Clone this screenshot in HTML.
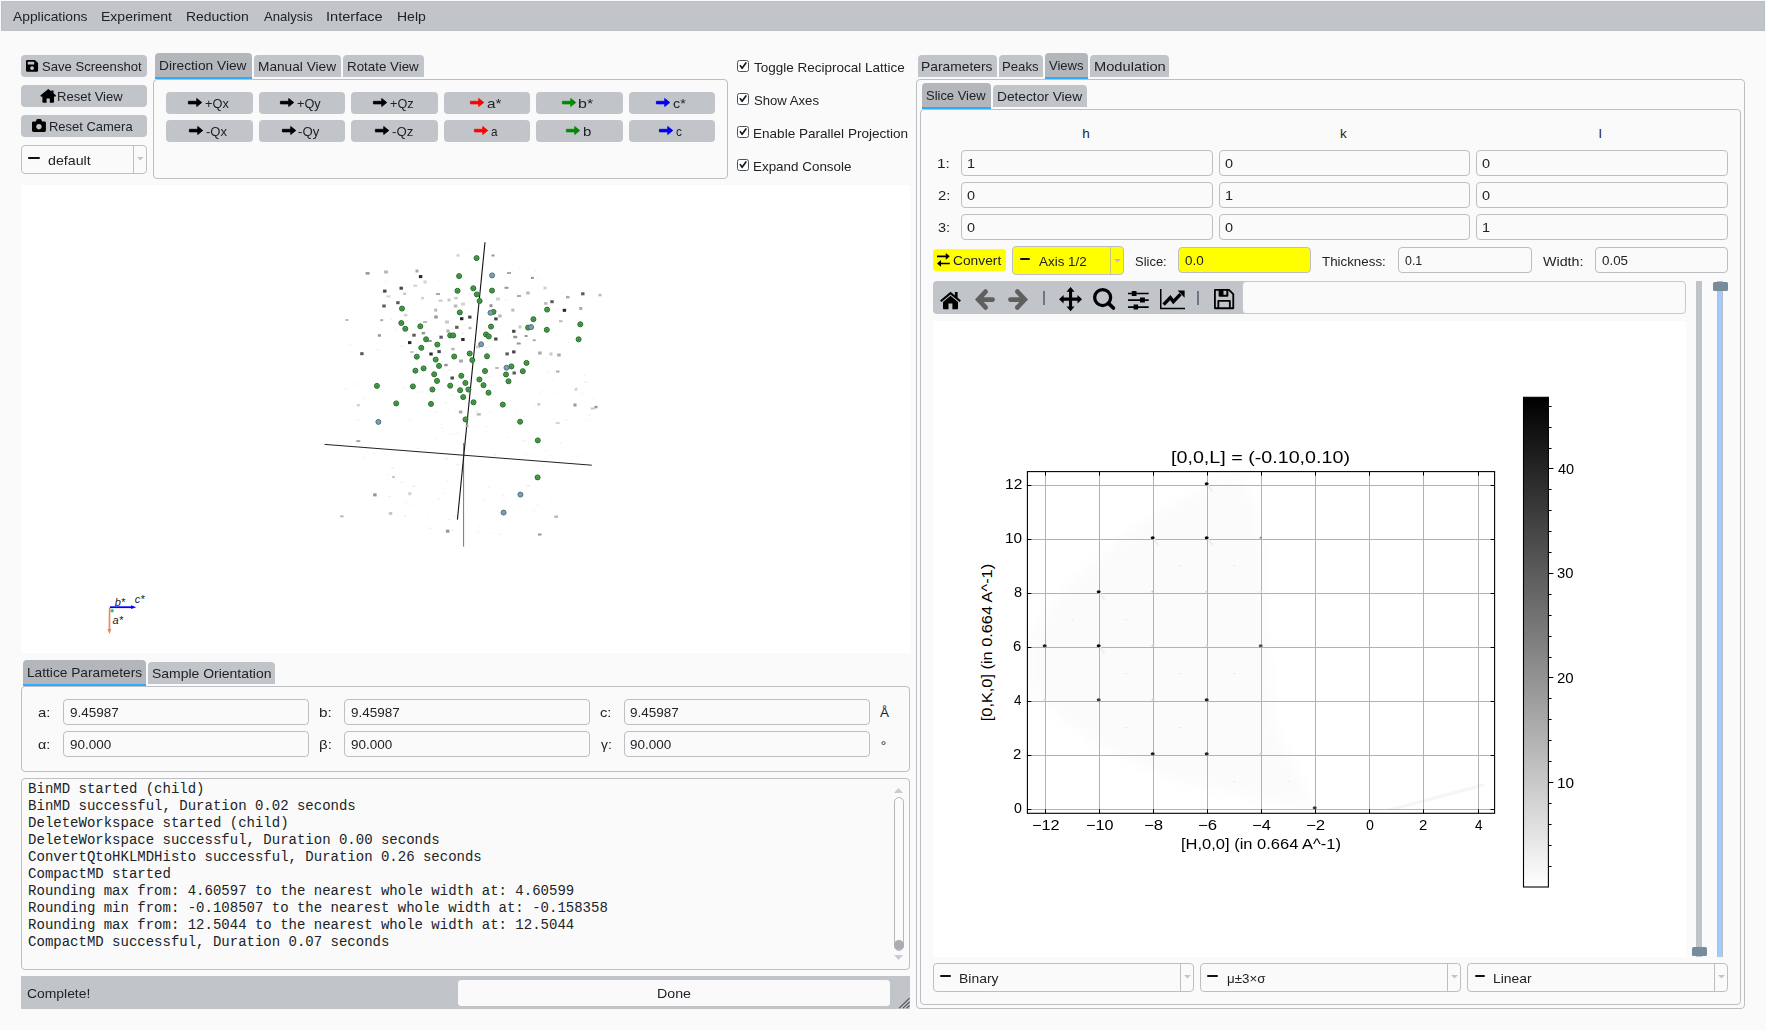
<!DOCTYPE html>
<html><head><meta charset="utf-8"><title>UI</title><style>
html,body{margin:0;padding:0}
body{width:1766px;height:1030px;background:#fafafa;position:relative;overflow:hidden;font-family:"Liberation Sans",sans-serif;font-size:14px;color:#202326}
.a{position:absolute}
.t{position:absolute;white-space:nowrap;line-height:1;display:block}
svg{overflow:visible}
</style></head><body>
<div class="a" style="left:1.00px;top:1.00px;width:1764.00px;height:30.00px;background:#c1c4c9;border:1px solid #bbbec3;box-sizing:border-box;"></div>
<span class="t" style="font-size:13.5px;transform:scaleX(1.0236);transform-origin:0 0;left:13.00px;top:10px;">Applications</span>
<span class="t" style="font-size:13.5px;transform:scaleX(1.0378);transform-origin:0 0;left:101.48px;top:10px;">Experiment</span>
<span class="t" style="font-size:13.5px;transform:scaleX(1.0330);transform-origin:0 0;left:186.48px;top:10px;">Reduction</span>
<span class="t" style="font-size:13.5px;transform:scaleX(0.9696);transform-origin:0 0;left:263.70px;top:10px;">Analysis</span>
<span class="t" style="font-size:13.5px;transform:scaleX(1.0796);transform-origin:0 0;left:325.89px;top:10px;">Interface</span>
<span class="t" style="font-size:13.5px;transform:scaleX(1.0374);transform-origin:0 0;left:396.78px;top:10px;">Help</span>
<div class="a" style="left:21.00px;top:55.30px;width:126.00px;height:21.50px;background:#c1c4c9;border-radius:4px;"></div>
<svg preserveAspectRatio="none" class="a" style="left:25.90px;top:60.10px;display:block;" width="12.10" height="11.70" viewBox="0 0 14 14"><path fill="#000" fill-rule="evenodd" d="M1.5 0H10.3L14 3.7V12.5Q14 14 12.5 14H1.5Q0 14 0 12.5V1.5Q0 0 1.5 0Z M2 2V5.5H9.5V2Z M7 7.5a2.2 2.2 0 1 0 .01 0Z"/></svg>
<span class="t" style="font-size:13.5px;transform:scaleX(0.9687);transform-origin:0 0;left:41.71px;top:60px;">Save Screenshot</span>
<div class="a" style="left:21.00px;top:85.30px;width:126.00px;height:21.50px;background:#c1c4c9;border-radius:4px;"></div>
<svg preserveAspectRatio="none" class="a" style="left:39.90px;top:88.90px;display:block;" width="16.00" height="13.80" viewBox="0 0 16 14"><path fill="#000" d="M8 .3Q8.4 0 8.8 .3L11.3 2.5V1.4h2.2V4.4L15.8 6.4Q16.2 6.8 15.8 7.2L15.3 7.8Q15 8.1 14.6 7.8L14 7.3V13.2Q14 14 13.2 14H9.8V9.6H6.6V14H3.2Q2.4 14 2.4 13.2V7.3L1.8 7.8Q1.4 8.1 1.1 7.8L.6 7.2Q.2 6.8 .6 6.4Z"/></svg>
<span class="t" style="font-size:13.5px;transform:scaleX(0.9653);transform-origin:0 0;left:57.46px;top:90px;">Reset View</span>
<div class="a" style="left:21.00px;top:115.30px;width:126.00px;height:21.50px;background:#c1c4c9;border-radius:4px;"></div>
<svg preserveAspectRatio="none" class="a" style="left:32.00px;top:119.10px;display:block;" width="13.90" height="13.00" viewBox="0 0 14 13"><path fill="#000" fill-rule="evenodd" d="M1.4 2.4H3.9L4.5 .8Q4.8 0 5.6 0H8.4Q9.2 0 9.5 .8L10.1 2.4H12.6Q14 2.4 14 3.8V11.6Q14 13 12.6 13H1.4Q0 13 0 11.6V3.8Q0 2.4 1.4 2.4Z M7 4.9a2.8 2.8 0 1 0 .01 0Z"/></svg>
<span class="t" style="font-size:13.5px;transform:scaleX(0.9605);transform-origin:0 0;left:48.66px;top:120px;">Reset Camera</span>
<div class="a" style="left:21.00px;top:145.00px;width:126.00px;height:29.00px;background:#fafafa;border:1px solid #bcbfc4;box-sizing:border-box;border-radius:4px;"></div>
<div class="a" style="left:133.00px;top:146.00px;width:1.00px;height:27.00px;background:#bcbfc4;"></div>
<div class="a" style="left:28.20px;top:157.00px;width:11.40px;height:2.20px;background:#111;border-radius:1px;"></div>
<span class="t" style="font-size:13.5px;transform:scaleX(1.0536);transform-origin:0 0;left:48.23px;top:154px;">default</span>
<svg class="a" style="left:136.60px;top:157.40px;" width="6.60" height="3.60" viewBox="0 0 6.6 3.6"><path fill="#c3c5c9" d="M0 0H6.6L3.3 3.6Z"/></svg>
<div class="a" style="left:155.00px;top:53.00px;width:96.80px;height:25.90px;background:#b3b6bb;border-radius:4px 4px 0 0;border-bottom:2.9px solid #2eaaff;box-sizing:border-box;"></div>
<span class="t" style="font-size:13.5px;transform:scaleX(1.0167);transform-origin:0 0;left:159.30px;top:59px;">Direction View</span>
<div class="a" style="left:254.20px;top:55.30px;width:86.80px;height:21.50px;background:#c1c4c9;border-radius:4px 4px 0 0;"></div>
<span class="t" style="font-size:13.5px;transform:scaleX(1.0131);transform-origin:0 0;left:258.01px;top:60px;">Manual View</span>
<div class="a" style="left:343.30px;top:55.30px;width:80.50px;height:21.50px;background:#c1c4c9;border-radius:4px 4px 0 0;"></div>
<span class="t" style="font-size:13.5px;transform:scaleX(0.9891);transform-origin:0 0;left:347.23px;top:60px;">Rotate View</span>
<div class="a" style="left:153.00px;top:79.00px;width:575.00px;height:100.00px;border:1px solid #bcbfc4;box-sizing:border-box;border-radius:4px;"></div>
<div class="a" style="left:166.00px;top:92.10px;width:87.00px;height:21.80px;background:#c1c4c9;border-radius:4px;"></div>
<svg preserveAspectRatio="none" class="a" style="left:187.90px;top:98.00px;display:block;" width="14.20" height="9.00" viewBox="0 0 14 9"><path fill="#000" stroke="#000" stroke-width="0.8" stroke-linejoin="round" d="M.4 3.3H8.6V.5L13.6 4.5 8.6 8.5V5.9H.4Z"/></svg>
<span class="t" style="font-size:13.5px;transform:scaleX(0.9480);transform-origin:0 0;left:205.32px;top:97px;">+Qx</span>
<div class="a" style="left:259.00px;top:92.10px;width:86.00px;height:21.80px;background:#c1c4c9;border-radius:4px;"></div>
<svg preserveAspectRatio="none" class="a" style="left:280.00px;top:98.00px;display:block;" width="14.20" height="9.00" viewBox="0 0 14 9"><path fill="#000" stroke="#000" stroke-width="0.8" stroke-linejoin="round" d="M.4 3.3H8.6V.5L13.6 4.5 8.6 8.5V5.9H.4Z"/></svg>
<span class="t" style="font-size:13.5px;transform:scaleX(0.9428);transform-origin:0 0;left:297.13px;top:97px;">+Qy</span>
<div class="a" style="left:351.00px;top:92.10px;width:87.00px;height:21.80px;background:#c1c4c9;border-radius:4px;"></div>
<svg preserveAspectRatio="none" class="a" style="left:372.80px;top:98.00px;display:block;" width="14.20" height="9.00" viewBox="0 0 14 9"><path fill="#000" stroke="#000" stroke-width="0.8" stroke-linejoin="round" d="M.4 3.3H8.6V.5L13.6 4.5 8.6 8.5V5.9H.4Z"/></svg>
<span class="t" style="font-size:13.5px;transform:scaleX(0.9374);transform-origin:0 0;left:390.23px;top:97px;">+Qz</span>
<div class="a" style="left:444.00px;top:92.10px;width:86.00px;height:21.80px;background:#c1c4c9;border-radius:4px;"></div>
<svg preserveAspectRatio="none" class="a" style="left:470.00px;top:98.00px;display:block;" width="14.20" height="9.00" viewBox="0 0 14 9"><path fill="#f00" stroke="#f00" stroke-width="0.8" stroke-linejoin="round" d="M.4 3.3H8.6V.5L13.6 4.5 8.6 8.5V5.9H.4Z"/></svg>
<span class="t" style="font-size:13.5px;transform:scaleX(1.1319);transform-origin:0 0;left:486.99px;top:97px;">a*</span>
<div class="a" style="left:536.00px;top:92.10px;width:87.00px;height:21.80px;background:#c1c4c9;border-radius:4px;"></div>
<svg preserveAspectRatio="none" class="a" style="left:561.70px;top:98.00px;display:block;" width="14.20" height="9.00" viewBox="0 0 14 9"><path fill="#008a00" stroke="#008a00" stroke-width="0.8" stroke-linejoin="round" d="M.4 3.3H8.6V.5L13.6 4.5 8.6 8.5V5.9H.4Z"/></svg>
<span class="t" style="font-size:13.5px;transform:scaleX(1.1835);transform-origin:0 0;left:578.44px;top:97px;">b*</span>
<div class="a" style="left:629.00px;top:92.10px;width:86.00px;height:21.80px;background:#c1c4c9;border-radius:4px;"></div>
<svg preserveAspectRatio="none" class="a" style="left:655.90px;top:98.00px;display:block;" width="14.20" height="9.00" viewBox="0 0 14 9"><path fill="#0000f0" stroke="#0000f0" stroke-width="0.8" stroke-linejoin="round" d="M.4 3.3H8.6V.5L13.6 4.5 8.6 8.5V5.9H.4Z"/></svg>
<span class="t" style="font-size:13.5px;transform:scaleX(1.0557);transform-origin:0 0;left:673.33px;top:97px;">c*</span>
<div class="a" style="left:166.00px;top:120.10px;width:87.00px;height:21.80px;background:#c1c4c9;border-radius:4px;"></div>
<svg preserveAspectRatio="none" class="a" style="left:188.90px;top:126.00px;display:block;" width="14.20" height="9.00" viewBox="0 0 14 9"><path fill="#000" stroke="#000" stroke-width="0.8" stroke-linejoin="round" d="M.4 3.3H8.6V.5L13.6 4.5 8.6 8.5V5.9H.4Z"/></svg>
<span class="t" style="font-size:13.5px;transform:scaleX(0.9687);transform-origin:0 0;left:206.08px;top:125px;">-Qx</span>
<div class="a" style="left:259.00px;top:120.10px;width:86.00px;height:21.80px;background:#c1c4c9;border-radius:4px;"></div>
<svg preserveAspectRatio="none" class="a" style="left:281.70px;top:126.00px;display:block;" width="14.20" height="9.00" viewBox="0 0 14 9"><path fill="#000" stroke="#000" stroke-width="0.8" stroke-linejoin="round" d="M.4 3.3H8.6V.5L13.6 4.5 8.6 8.5V5.9H.4Z"/></svg>
<span class="t" style="font-size:13.5px;transform:scaleX(0.9766);transform-origin:0 0;left:298.47px;top:125px;">-Qy</span>
<div class="a" style="left:351.00px;top:120.10px;width:87.00px;height:21.80px;background:#c1c4c9;border-radius:4px;"></div>
<svg preserveAspectRatio="none" class="a" style="left:374.80px;top:126.00px;display:block;" width="14.20" height="9.00" viewBox="0 0 14 9"><path fill="#000" stroke="#000" stroke-width="0.8" stroke-linejoin="round" d="M.4 3.3H8.6V.5L13.6 4.5 8.6 8.5V5.9H.4Z"/></svg>
<span class="t" style="font-size:13.5px;transform:scaleX(0.9763);transform-origin:0 0;left:391.57px;top:125px;">-Qz</span>
<div class="a" style="left:444.00px;top:120.10px;width:86.00px;height:21.80px;background:#c1c4c9;border-radius:4px;"></div>
<svg preserveAspectRatio="none" class="a" style="left:473.70px;top:126.00px;display:block;" width="14.20" height="9.00" viewBox="0 0 14 9"><path fill="#f00" stroke="#f00" stroke-width="0.8" stroke-linejoin="round" d="M.4 3.3H8.6V.5L13.6 4.5 8.6 8.5V5.9H.4Z"/></svg>
<span class="t" style="font-size:13.5px;transform:scaleX(0.8689);transform-origin:0 0;left:491.23px;top:125px;">a</span>
<div class="a" style="left:536.00px;top:120.10px;width:87.00px;height:21.80px;background:#c1c4c9;border-radius:4px;"></div>
<svg preserveAspectRatio="none" class="a" style="left:565.80px;top:126.00px;display:block;" width="14.20" height="9.00" viewBox="0 0 14 9"><path fill="#008a00" stroke="#008a00" stroke-width="0.8" stroke-linejoin="round" d="M.4 3.3H8.6V.5L13.6 4.5 8.6 8.5V5.9H.4Z"/></svg>
<span class="t" style="font-size:13.5px;transform:scaleX(1.1070);transform-origin:0 0;left:582.90px;top:125px;">b</span>
<div class="a" style="left:629.00px;top:120.10px;width:86.00px;height:21.80px;background:#c1c4c9;border-radius:4px;"></div>
<svg preserveAspectRatio="none" class="a" style="left:658.90px;top:126.00px;display:block;" width="14.20" height="9.00" viewBox="0 0 14 9"><path fill="#0000f0" stroke="#0000f0" stroke-width="0.8" stroke-linejoin="round" d="M.4 3.3H8.6V.5L13.6 4.5 8.6 8.5V5.9H.4Z"/></svg>
<span class="t" style="font-size:13.5px;transform:scaleX(0.8685);transform-origin:0 0;left:676.43px;top:125px;">c</span>
<div class="a" style="left:737.00px;top:60.00px;width:12.00px;height:12.00px;background:#ffffff;border:1px solid #4d535c;box-sizing:border-box;border-radius:2.5px;"></div>
<svg class="a" style="left:737.00px;top:60.00px;" width="12.00" height="12.00" viewBox="0 0 12 12"><path fill="none" stroke="#181c21" stroke-width="1.7" stroke-linecap="round" stroke-linejoin="round" d="M3.3 5.6L5.1 8.3 8.9 2.9"/></svg>
<span class="t" style="font-size:13.5px;transform:scaleX(0.9988);transform-origin:0 0;left:754.13px;top:61px;">Toggle Reciprocal Lattice</span>
<div class="a" style="left:737.00px;top:93.00px;width:12.00px;height:12.00px;background:#ffffff;border:1px solid #4d535c;box-sizing:border-box;border-radius:2.5px;"></div>
<svg class="a" style="left:737.00px;top:93.00px;" width="12.00" height="12.00" viewBox="0 0 12 12"><path fill="none" stroke="#181c21" stroke-width="1.7" stroke-linecap="round" stroke-linejoin="round" d="M3.3 5.6L5.1 8.3 8.9 2.9"/></svg>
<span class="t" style="font-size:13.5px;transform:scaleX(0.9729);transform-origin:0 0;left:753.81px;top:94px;">Show Axes</span>
<div class="a" style="left:737.00px;top:126.00px;width:12.00px;height:12.00px;background:#ffffff;border:1px solid #4d535c;box-sizing:border-box;border-radius:2.5px;"></div>
<svg class="a" style="left:737.00px;top:126.00px;" width="12.00" height="12.00" viewBox="0 0 12 12"><path fill="none" stroke="#181c21" stroke-width="1.7" stroke-linecap="round" stroke-linejoin="round" d="M3.3 5.6L5.1 8.3 8.9 2.9"/></svg>
<span class="t" style="font-size:13.5px;transform:scaleX(1.0034);transform-origin:0 0;left:753.32px;top:127px;">Enable Parallel Projection</span>
<div class="a" style="left:737.00px;top:159.00px;width:12.00px;height:12.00px;background:#ffffff;border:1px solid #4d535c;box-sizing:border-box;border-radius:2.5px;"></div>
<svg class="a" style="left:737.00px;top:159.00px;" width="12.00" height="12.00" viewBox="0 0 12 12"><path fill="none" stroke="#181c21" stroke-width="1.7" stroke-linecap="round" stroke-linejoin="round" d="M3.3 5.6L5.1 8.3 8.9 2.9"/></svg>
<span class="t" style="font-size:13.5px;transform:scaleX(0.9938);transform-origin:0 0;left:753.33px;top:160px;">Expand Console</span>
<div class="a" style="left:21.00px;top:185.00px;width:889.00px;height:468.00px;background:#ffffff;"></div>
<svg class="a" style="left:0.00px;top:0.00px;pointer-events:none;" width="1766.00" height="1030.00" viewBox="0 0 1766 1030"><rect x="449.3" y="433.1" width="1" height="1.5" fill="rgb(236,236,236)"/><rect x="546.1" y="450.5" width="1" height="1" fill="rgb(240,240,240)"/><rect x="443.9" y="402.3" width="3" height="1" fill="rgb(236,236,236)"/><rect x="485.2" y="352.1" width="1" height="1.5" fill="rgb(240,240,240)"/><rect x="449.6" y="377.3" width="1" height="1.5" fill="rgb(240,240,240)"/><rect x="506.9" y="334.6" width="1" height="1.5" fill="rgb(240,240,240)"/><rect x="426.7" y="513.9" width="1" height="1.5" fill="rgb(240,240,240)"/><rect x="425.0" y="366.2" width="1" height="1.5" fill="rgb(236,236,236)"/><rect x="514.9" y="411.3" width="2" height="1" fill="rgb(247,247,247)"/><rect x="398.6" y="342.2" width="1.5" height="1" fill="rgb(244,244,244)"/><rect x="450.4" y="328.9" width="3" height="1" fill="rgb(244,244,244)"/><rect x="460.1" y="319.5" width="1" height="1.5" fill="rgb(236,236,236)"/><rect x="372.2" y="452.5" width="3" height="1" fill="rgb(240,240,240)"/><rect x="567.0" y="418.7" width="2" height="1.5" fill="rgb(244,244,244)"/><rect x="417.7" y="469.7" width="1" height="1" fill="rgb(247,247,247)"/><rect x="546.1" y="357.3" width="1" height="1.5" fill="rgb(236,236,236)"/><rect x="438.0" y="279.8" width="2" height="1.5" fill="rgb(247,247,247)"/><rect x="391.1" y="467.5" width="3" height="1" fill="rgb(236,236,236)"/><rect x="485.7" y="426.0" width="1.5" height="1" fill="rgb(236,236,236)"/><rect x="506.7" y="437.1" width="3" height="1" fill="rgb(247,247,247)"/><rect x="505.7" y="465.1" width="1.5" height="1" fill="rgb(244,244,244)"/><rect x="507.6" y="337.5" width="2" height="1.5" fill="rgb(247,247,247)"/><rect x="562.6" y="292.8" width="1" height="1" fill="rgb(240,240,240)"/><rect x="526.8" y="485.0" width="3" height="1.5" fill="rgb(236,236,236)"/><rect x="493.1" y="453.9" width="3" height="1.5" fill="rgb(240,240,240)"/><rect x="405.0" y="468.1" width="1" height="1" fill="rgb(240,240,240)"/><rect x="558.4" y="313.7" width="3" height="1" fill="rgb(247,247,247)"/><rect x="402.0" y="449.7" width="1" height="1" fill="rgb(247,247,247)"/><rect x="514.3" y="414.1" width="1" height="1" fill="rgb(240,240,240)"/><rect x="441.3" y="367.4" width="1" height="1" fill="rgb(240,240,240)"/><rect x="448.0" y="370.0" width="3" height="1" fill="rgb(240,240,240)"/><rect x="384.0" y="280.9" width="3" height="1" fill="rgb(244,244,244)"/><rect x="531.3" y="454.7" width="3" height="1" fill="rgb(247,247,247)"/><rect x="452.6" y="433.4" width="2" height="1" fill="rgb(244,244,244)"/><rect x="488.7" y="345.8" width="1.5" height="1.5" fill="rgb(236,236,236)"/><rect x="400.8" y="481.7" width="2" height="1.5" fill="rgb(236,236,236)"/><rect x="536.4" y="298.6" width="2" height="1" fill="rgb(244,244,244)"/><rect x="435.5" y="438.0" width="1.5" height="1.5" fill="rgb(244,244,244)"/><rect x="516.6" y="252.3" width="1.5" height="1" fill="rgb(240,240,240)"/><rect x="464.6" y="328.5" width="2" height="1.5" fill="rgb(247,247,247)"/><rect x="482.9" y="393.2" width="3" height="1" fill="rgb(244,244,244)"/><rect x="501.3" y="494.1" width="3" height="1.5" fill="rgb(244,244,244)"/><rect x="594.1" y="379.0" width="1" height="1" fill="rgb(244,244,244)"/><rect x="534.2" y="447.1" width="1.5" height="1" fill="rgb(244,244,244)"/><rect x="381.2" y="291.0" width="3" height="1.5" fill="rgb(236,236,236)"/><rect x="412.4" y="485.6" width="3" height="1.5" fill="rgb(236,236,236)"/><rect x="468.1" y="293.7" width="3" height="1.5" fill="rgb(240,240,240)"/><rect x="411.6" y="504.0" width="3" height="1" fill="rgb(247,247,247)"/><rect x="466.8" y="355.9" width="1.5" height="1" fill="rgb(240,240,240)"/><rect x="561.4" y="408.8" width="1.5" height="1.5" fill="rgb(247,247,247)"/><rect x="527.4" y="258.6" width="1.5" height="1.5" fill="rgb(244,244,244)"/><rect x="455.6" y="385.5" width="1.5" height="1" fill="rgb(236,236,236)"/><rect x="516.5" y="385.3" width="1" height="1" fill="rgb(240,240,240)"/><rect x="487.9" y="486.4" width="2" height="1.5" fill="rgb(244,244,244)"/><rect x="434.5" y="411.6" width="3" height="1.5" fill="rgb(244,244,244)"/><rect x="362.0" y="319.4" width="1.5" height="1.5" fill="rgb(247,247,247)"/><rect x="518.2" y="471.7" width="1.5" height="1.5" fill="rgb(247,247,247)"/><rect x="581.6" y="393.2" width="1.5" height="1" fill="rgb(240,240,240)"/><rect x="441.3" y="361.4" width="2" height="1.5" fill="rgb(236,236,236)"/><rect x="377.3" y="377.9" width="1" height="1" fill="rgb(236,236,236)"/><rect x="475.0" y="410.9" width="3" height="1.5" fill="rgb(236,236,236)"/><rect x="587.7" y="414.4" width="3" height="1" fill="rgb(236,236,236)"/><rect x="402.4" y="325.3" width="2" height="1" fill="rgb(240,240,240)"/><rect x="353.8" y="383.2" width="2" height="1.5" fill="rgb(240,240,240)"/><rect x="507.0" y="354.1" width="1.5" height="1" fill="rgb(247,247,247)"/><rect x="525.5" y="453.6" width="1.5" height="1" fill="rgb(236,236,236)"/><rect x="559.6" y="442.3" width="1.5" height="1.5" fill="rgb(236,236,236)"/><rect x="423.9" y="325.6" width="1.5" height="1" fill="rgb(244,244,244)"/><rect x="492.0" y="533.0" width="3" height="1" fill="rgb(247,247,247)"/><rect x="584.2" y="381.5" width="3" height="1.5" fill="rgb(240,240,240)"/><rect x="404.3" y="440.7" width="2" height="1" fill="rgb(244,244,244)"/><rect x="465.9" y="376.1" width="3" height="1.5" fill="rgb(247,247,247)"/><rect x="534.6" y="398.8" width="1" height="1" fill="rgb(244,244,244)"/><rect x="580.2" y="377.8" width="1" height="1" fill="rgb(236,236,236)"/><rect x="451.2" y="530.0" width="2" height="1" fill="rgb(240,240,240)"/><rect x="518.0" y="266.8" width="3" height="1" fill="rgb(244,244,244)"/><rect x="383.0" y="367.0" width="2" height="1" fill="rgb(247,247,247)"/><rect x="447.4" y="519.0" width="3" height="1" fill="rgb(240,240,240)"/><rect x="466.7" y="402.8" width="2" height="1" fill="rgb(236,236,236)"/><rect x="427.0" y="351.7" width="1" height="1" fill="rgb(244,244,244)"/><rect x="597.2" y="400.8" width="2" height="1.5" fill="rgb(247,247,247)"/><rect x="528.9" y="464.1" width="1" height="1" fill="rgb(240,240,240)"/><rect x="464.5" y="443.7" width="2" height="1.5" fill="rgb(244,244,244)"/><rect x="471.7" y="318.8" width="2" height="1" fill="rgb(240,240,240)"/><rect x="510.9" y="248.9" width="1" height="1" fill="rgb(236,236,236)"/><rect x="458.4" y="285.7" width="3" height="1" fill="rgb(240,240,240)"/><rect x="499.1" y="374.4" width="3" height="1.5" fill="rgb(247,247,247)"/><rect x="505.6" y="316.2" width="1.5" height="1" fill="rgb(244,244,244)"/><rect x="403.9" y="502.2" width="3" height="1" fill="rgb(240,240,240)"/><rect x="584.1" y="374.7" width="1" height="1.5" fill="rgb(236,236,236)"/><rect x="464.7" y="323.9" width="1" height="1" fill="rgb(240,240,240)"/><rect x="431.0" y="317.6" width="1.5" height="1.5" fill="rgb(244,244,244)"/><rect x="446.2" y="480.6" width="2" height="1" fill="rgb(240,240,240)"/><rect x="538.9" y="391.9" width="2" height="1" fill="rgb(244,244,244)"/><rect x="585.8" y="419.9" width="2" height="1" fill="rgb(240,240,240)"/><rect x="540.9" y="390.6" width="2" height="1.5" fill="rgb(247,247,247)"/><rect x="436.6" y="336.0" width="1" height="1" fill="rgb(236,236,236)"/><rect x="484.6" y="347.2" width="3" height="1" fill="rgb(236,236,236)"/><rect x="437.8" y="498.2" width="1.5" height="1.5" fill="rgb(236,236,236)"/><rect x="555.8" y="309.1" width="2" height="1.5" fill="rgb(247,247,247)"/><rect x="509.4" y="385.4" width="1" height="1.5" fill="rgb(240,240,240)"/><rect x="544.5" y="318.8" width="1" height="1.5" fill="rgb(240,240,240)"/><rect x="363.1" y="319.4" width="1" height="1" fill="rgb(240,240,240)"/><rect x="563.8" y="419.8" width="3" height="1" fill="rgb(236,236,236)"/><rect x="376.3" y="349.2" width="3" height="1" fill="rgb(240,240,240)"/><rect x="581.5" y="392.7" width="1" height="1.5" fill="rgb(236,236,236)"/><rect x="463.3" y="324.6" width="2" height="1" fill="rgb(236,236,236)"/><rect x="461.5" y="332.5" width="3" height="1" fill="rgb(247,247,247)"/><rect x="576.9" y="455.7" width="1" height="1.5" fill="rgb(244,244,244)"/><rect x="434.9" y="347.9" width="2" height="1" fill="rgb(240,240,240)"/><rect x="407.5" y="291.9" width="1" height="1" fill="rgb(240,240,240)"/><rect x="522.9" y="415.4" width="1.5" height="1.5" fill="rgb(236,236,236)"/><rect x="362.5" y="398.0" width="3" height="1" fill="rgb(244,244,244)"/><rect x="432.6" y="398.8" width="2" height="1" fill="rgb(240,240,240)"/><rect x="478.6" y="384.8" width="1" height="1.5" fill="rgb(247,247,247)"/><rect x="546.8" y="371.5" width="3" height="1" fill="rgb(244,244,244)"/><rect x="575.8" y="318.1" width="1" height="1" fill="rgb(236,236,236)"/><rect x="467.1" y="322.9" width="1.5" height="1.5" fill="rgb(244,244,244)"/><rect x="505.0" y="299.6" width="2" height="1" fill="rgb(236,236,236)"/><rect x="347.9" y="391.8" width="1" height="1" fill="rgb(247,247,247)"/><rect x="552.9" y="392.2" width="3" height="1" fill="rgb(247,247,247)"/><rect x="457.0" y="302.3" width="2" height="1" fill="rgb(247,247,247)"/><rect x="469.5" y="387.2" width="3" height="1" fill="rgb(244,244,244)"/><rect x="513.4" y="369.2" width="2" height="1" fill="rgb(236,236,236)"/><rect x="416.4" y="451.6" width="2" height="1" fill="rgb(236,236,236)"/><rect x="472.2" y="253.6" width="1" height="1" fill="rgb(244,244,244)"/><rect x="499.1" y="329.1" width="1.5" height="1" fill="rgb(240,240,240)"/><rect x="408.1" y="419.3" width="3" height="1" fill="rgb(244,244,244)"/><rect x="505.4" y="284.7" width="1" height="1" fill="rgb(240,240,240)"/><rect x="537.7" y="354.3" width="2" height="1" fill="rgb(240,240,240)"/><rect x="586.4" y="433.4" width="1.5" height="1" fill="rgb(240,240,240)"/><rect x="415.7" y="425.8" width="2" height="1" fill="rgb(244,244,244)"/><rect x="432.8" y="329.4" width="1" height="1" fill="rgb(247,247,247)"/><rect x="450.9" y="365.1" width="1.5" height="1" fill="rgb(247,247,247)"/><rect x="575.9" y="306.8" width="3" height="1" fill="rgb(247,247,247)"/><rect x="414.7" y="371.0" width="2" height="1.5" fill="rgb(240,240,240)"/><rect x="514.3" y="424.4" width="1.5" height="1" fill="rgb(244,244,244)"/><rect x="467.8" y="301.8" width="1.5" height="1" fill="rgb(247,247,247)"/><rect x="454.1" y="515.4" width="2" height="1.5" fill="rgb(247,247,247)"/><rect x="504.7" y="381.3" width="1" height="1" fill="rgb(240,240,240)"/><rect x="526.4" y="338.9" width="3" height="1" fill="rgb(247,247,247)"/><rect x="537.6" y="277.5" width="1.5" height="1" fill="rgb(236,236,236)"/><rect x="369.4" y="447.8" width="3" height="1" fill="rgb(247,247,247)"/><rect x="579.6" y="453.7" width="3" height="1" fill="rgb(247,247,247)"/><rect x="478.9" y="330.2" width="1" height="1.5" fill="rgb(240,240,240)"/><rect x="432.4" y="260.7" width="1" height="1.5" fill="rgb(247,247,247)"/><rect x="468.4" y="387.2" width="1.5" height="1.5" fill="rgb(240,240,240)"/><rect x="555.6" y="334.4" width="1.5" height="1.5" fill="rgb(244,244,244)"/><rect x="466.9" y="504.4" width="1" height="1" fill="rgb(236,236,236)"/><rect x="428.9" y="527.7" width="3" height="1" fill="rgb(240,240,240)"/><rect x="483.8" y="499.0" width="2" height="1" fill="rgb(236,236,236)"/><rect x="456.4" y="464.0" width="3" height="1.5" fill="rgb(240,240,240)"/><rect x="473.4" y="454.5" width="2" height="1" fill="rgb(247,247,247)"/><rect x="552.8" y="403.5" width="1" height="1" fill="rgb(247,247,247)"/><rect x="478.8" y="478.8" width="1.5" height="1" fill="rgb(244,244,244)"/><rect x="534.3" y="406.6" width="2" height="1.5" fill="rgb(247,247,247)"/><rect x="462.8" y="394.5" width="1" height="1" fill="rgb(244,244,244)"/><rect x="418.5" y="391.5" width="1.5" height="1" fill="rgb(240,240,240)"/><rect x="487.7" y="515.2" width="1" height="1.5" fill="rgb(244,244,244)"/><rect x="420.4" y="391.5" width="3" height="1" fill="rgb(240,240,240)"/><rect x="487.6" y="375.7" width="3" height="1" fill="rgb(240,240,240)"/><rect x="497.5" y="533.7" width="3" height="1" fill="rgb(240,240,240)"/><rect x="456.2" y="337.4" width="2" height="1.5" fill="rgb(247,247,247)"/><rect x="489.5" y="411.4" width="2" height="1" fill="rgb(240,240,240)"/><rect x="517.2" y="522.5" width="1" height="1" fill="rgb(247,247,247)"/><rect x="430.8" y="318.1" width="2" height="1" fill="rgb(244,244,244)"/><rect x="469.9" y="393.9" width="1" height="1" fill="rgb(244,244,244)"/><rect x="362.1" y="457.0" width="3" height="1" fill="rgb(240,240,240)"/><rect x="475.5" y="316.4" width="1" height="1" fill="rgb(247,247,247)"/><rect x="454.4" y="335.8" width="1.5" height="1" fill="rgb(247,247,247)"/><rect x="387.9" y="495.8" width="3" height="1" fill="rgb(236,236,236)"/><rect x="510.0" y="271.6" width="3" height="1" fill="rgb(236,236,236)"/><rect x="356.9" y="419.5" width="2" height="1" fill="rgb(236,236,236)"/><rect x="465.9" y="249.3" width="2" height="1" fill="rgb(244,244,244)"/><rect x="403.7" y="515.5" width="2" height="1.5" fill="rgb(236,236,236)"/><rect x="454.4" y="316.4" width="2" height="1" fill="rgb(244,244,244)"/><rect x="451.1" y="281.8" width="1" height="1" fill="rgb(236,236,236)"/><rect x="551.1" y="466.6" width="3" height="1" fill="rgb(247,247,247)"/><rect x="566.4" y="321.4" width="3" height="1" fill="rgb(240,240,240)"/><rect x="592.4" y="397.9" width="1.5" height="1.5" fill="rgb(244,244,244)"/><rect x="478.3" y="526.6" width="2" height="1.5" fill="rgb(247,247,247)"/><rect x="511.2" y="417.0" width="1.5" height="1" fill="rgb(240,240,240)"/><rect x="483.7" y="397.8" width="1.5" height="1" fill="rgb(244,244,244)"/><rect x="564.0" y="290.5" width="1" height="1" fill="rgb(244,244,244)"/><rect x="538.4" y="446.3" width="1.5" height="1" fill="rgb(247,247,247)"/><rect x="522.8" y="459.9" width="1" height="1" fill="rgb(240,240,240)"/><rect x="442.9" y="492.7" width="2" height="1.5" fill="rgb(244,244,244)"/><rect x="462.8" y="481.4" width="1.5" height="1" fill="rgb(240,240,240)"/><rect x="536.9" y="504.4" width="2" height="1" fill="rgb(240,240,240)"/><rect x="365.2" y="480.7" width="1" height="1.5" fill="rgb(240,240,240)"/><rect x="450.5" y="394.7" width="3" height="1" fill="rgb(236,236,236)"/><rect x="534.4" y="270.2" width="2" height="1" fill="rgb(236,236,236)"/><rect x="503.1" y="427.7" width="1" height="1" fill="rgb(240,240,240)"/><rect x="422.0" y="385.8" width="1" height="1" fill="rgb(244,244,244)"/><rect x="399.3" y="297.2" width="1.5" height="1" fill="rgb(244,244,244)"/><rect x="440.7" y="424.1" width="2" height="1" fill="rgb(240,240,240)"/><rect x="386.4" y="322.2" width="1" height="1" fill="rgb(240,240,240)"/><rect x="407.6" y="434.8" width="1" height="1" fill="rgb(244,244,244)"/><rect x="551.7" y="409.3" width="1" height="1" fill="rgb(247,247,247)"/><rect x="527.9" y="441.1" width="1" height="1.5" fill="rgb(240,240,240)"/><rect x="522.0" y="493.3" width="2" height="1.5" fill="rgb(247,247,247)"/><rect x="423.3" y="526.3" width="2" height="1" fill="rgb(244,244,244)"/><rect x="364.9" y="458.9" width="1.5" height="1" fill="rgb(244,244,244)"/><rect x="461.1" y="332.8" width="3" height="1" fill="rgb(236,236,236)"/><rect x="365.6" y="451.4" width="2" height="1" fill="rgb(247,247,247)"/><rect x="473.5" y="346.4" width="1.5" height="1.5" fill="rgb(236,236,236)"/><rect x="493.9" y="309.2" width="1.5" height="1" fill="rgb(244,244,244)"/><rect x="442.8" y="431.1" width="1" height="1" fill="rgb(240,240,240)"/><rect x="386.3" y="474.5" width="2" height="1" fill="rgb(240,240,240)"/><rect x="478.3" y="370.5" width="2" height="1" fill="rgb(247,247,247)"/><rect x="390.7" y="318.4" width="1.5" height="1.5" fill="rgb(236,236,236)"/><rect x="479.8" y="330.7" width="1.5" height="1" fill="rgb(247,247,247)"/><rect x="489.3" y="444.9" width="1.5" height="1" fill="rgb(247,247,247)"/><rect x="441.7" y="427.1" width="1" height="1.5" fill="rgb(240,240,240)"/><rect x="524.2" y="291.2" width="1" height="1" fill="rgb(244,244,244)"/><rect x="394.4" y="328.7" width="3" height="1" fill="rgb(244,244,244)"/><rect x="400.4" y="345.4" width="3" height="1.5" fill="rgb(244,244,244)"/><rect x="455.4" y="396.0" width="3" height="1" fill="rgb(247,247,247)"/><rect x="375.9" y="426.9" width="1.5" height="1" fill="rgb(247,247,247)"/><rect x="447.2" y="407.4" width="3" height="1" fill="rgb(244,244,244)"/><rect x="534.8" y="440.1" width="1" height="1.5" fill="rgb(236,236,236)"/><rect x="552.6" y="494.3" width="1" height="1" fill="rgb(244,244,244)"/><rect x="469.6" y="249.7" width="1" height="1" fill="rgb(240,240,240)"/><rect x="575.8" y="387.0" width="1.5" height="1" fill="rgb(236,236,236)"/><rect x="552.4" y="378.8" width="1.5" height="1" fill="rgb(240,240,240)"/><rect x="516.2" y="293.3" width="1.5" height="1" fill="rgb(244,244,244)"/><rect x="515.7" y="348.2" width="1.5" height="1" fill="rgb(247,247,247)"/><rect x="344.4" y="388.0" width="2" height="1.5" fill="rgb(240,240,240)"/><rect x="402.5" y="387.1" width="1.5" height="1" fill="rgb(236,236,236)"/><rect x="386.5" y="455.2" width="2" height="1" fill="rgb(244,244,244)"/><rect x="522.9" y="503.2" width="1" height="1.5" fill="rgb(236,236,236)"/><rect x="548.1" y="275.8" width="1" height="1" fill="rgb(247,247,247)"/><rect x="566.4" y="385.0" width="2" height="1" fill="rgb(247,247,247)"/><rect x="417.2" y="448.0" width="2" height="1" fill="rgb(240,240,240)"/><rect x="475.3" y="298.4" width="1" height="1" fill="rgb(240,240,240)"/><rect x="492.2" y="330.4" width="1" height="1.5" fill="rgb(244,244,244)"/><rect x="508.6" y="400.1" width="3" height="1.5" fill="rgb(247,247,247)"/><rect x="454.2" y="408.2" width="1.5" height="1.5" fill="rgb(247,247,247)"/><rect x="460.4" y="377.4" width="2" height="1" fill="rgb(236,236,236)"/><rect x="523.0" y="440.1" width="3" height="1.5" fill="rgb(240,240,240)"/><rect x="455.7" y="432.6" width="3" height="1" fill="rgb(244,244,244)"/><rect x="550.8" y="498.0" width="1.5" height="1" fill="rgb(240,240,240)"/><rect x="549.8" y="454.9" width="3" height="1" fill="rgb(244,244,244)"/><rect x="490.6" y="384.5" width="3" height="1.5" fill="rgb(244,244,244)"/><rect x="567.6" y="342.1" width="1.5" height="1" fill="rgb(240,240,240)"/><rect x="553.6" y="418.0" width="1.5" height="1" fill="rgb(247,247,247)"/><rect x="534.4" y="509.4" width="1" height="1.5" fill="rgb(236,236,236)"/><rect x="349.0" y="344.5" width="3" height="1" fill="rgb(240,240,240)"/><rect x="368.9" y="376.8" width="1.5" height="1.5" fill="rgb(247,247,247)"/><rect x="445.0" y="457.9" width="3" height="1.5" fill="rgb(236,236,236)"/><rect x="397.9" y="370.1" width="3" height="1" fill="rgb(247,247,247)"/><rect x="463.8" y="296.9" width="1" height="1" fill="rgb(240,240,240)"/><rect x="470.1" y="411.2" width="2" height="1.5" fill="rgb(244,244,244)"/><rect x="561.7" y="427.1" width="2" height="1" fill="rgb(247,247,247)"/><rect x="388.1" y="275.7" width="1" height="1.5" fill="rgb(240,240,240)"/><rect x="525.7" y="396.4" width="1.5" height="1" fill="rgb(240,240,240)"/><rect x="466.4" y="313.3" width="2" height="1.5" fill="rgb(247,247,247)"/><rect x="476.3" y="531.2" width="3" height="1.5" fill="rgb(247,247,247)"/><rect x="429.7" y="260.6" width="1.5" height="1.5" fill="rgb(247,247,247)"/><rect x="552.5" y="303.8" width="1" height="1.5" fill="rgb(247,247,247)"/><path stroke="#222" stroke-width="1" fill="none" d="M324.6 444.4L591.8 465.2"/><path stroke="#777" stroke-width="1" fill="none" d="M463.6 443L463.6 546.6"/><path stroke="#111" stroke-width="1.1" fill="none" d="M485 242.2L457.4 519.6"/><rect x="380.2" y="319.2" width="3" height="2" fill="rgb(170,170,170)"/><rect x="491.5" y="254.5" width="3" height="2" fill="rgb(150,150,150)"/><rect x="456.5" y="254.2" width="3" height="2.5" fill="rgb(210,210,210)"/><rect x="507.0" y="272.0" width="4" height="2" fill="rgb(170,170,170)"/><rect x="530.9" y="276.9" width="3" height="2" fill="rgb(150,150,150)"/><rect x="504.5" y="286.8" width="4" height="2" fill="rgb(150,150,150)"/><rect x="489.5" y="304.2" width="3" height="3" fill="rgb(150,150,150)"/><rect x="511.3" y="308.6" width="3" height="3" fill="rgb(185,185,185)"/><rect x="513.2" y="335.8" width="4" height="2.5" fill="rgb(150,150,150)"/><rect x="524.6" y="335.0" width="3" height="2" fill="rgb(150,150,150)"/><rect x="532.7" y="339.2" width="3" height="2" fill="rgb(170,170,170)"/><rect x="516.7" y="342.5" width="4" height="2" fill="rgb(150,150,150)"/><rect x="559.0" y="320.2" width="3.5" height="2" fill="rgb(185,185,185)"/><rect x="579.3" y="307.0" width="3" height="3" fill="rgb(170,170,170)"/><rect x="566.0" y="295.9" width="3.5" height="2.5" fill="rgb(170,170,170)"/><rect x="544.0" y="302.2" width="3.5" height="2.5" fill="rgb(185,185,185)"/><rect x="421.6" y="331.9" width="3.5" height="2.5" fill="rgb(150,150,150)"/><rect x="434.2" y="308.6" width="3" height="3" fill="rgb(185,185,185)"/><rect x="453.8" y="304.5" width="3.5" height="3" fill="rgb(185,185,185)"/><rect x="403.9" y="313.9" width="3.5" height="2.5" fill="rgb(210,210,210)"/><rect x="386.4" y="295.4" width="4" height="2" fill="rgb(210,210,210)"/><rect x="403.1" y="292.6" width="3" height="2.5" fill="rgb(200,200,200)"/><rect x="421.1" y="296.9" width="3" height="2.5" fill="rgb(210,210,210)"/><rect x="438.6" y="299.7" width="4" height="2" fill="rgb(200,200,200)"/><rect x="413.2" y="284.7" width="4" height="2" fill="rgb(210,210,210)"/><rect x="365.6" y="272.1" width="4" height="2.5" fill="rgb(150,150,150)"/><rect x="556.0" y="370.5" width="3.5" height="2" fill="rgb(170,170,170)"/><rect x="574.5" y="388.2" width="3" height="2.5" fill="rgb(210,210,210)"/><rect x="377.9" y="334.2" width="3" height="2.5" fill="rgb(150,150,150)"/><rect x="537.3" y="403.1" width="3" height="2.5" fill="rgb(200,200,200)"/><rect x="458.9" y="410.5" width="3.5" height="3" fill="rgb(170,170,170)"/><rect x="476.8" y="413.1" width="4" height="2.5" fill="rgb(185,185,185)"/><rect x="356.8" y="403.9" width="3" height="2.5" fill="rgb(210,210,210)"/><rect x="356.3" y="440.1" width="4" height="2" fill="rgb(170,170,170)"/><rect x="392.0" y="476.1" width="3" height="2" fill="rgb(200,200,200)"/><rect x="373.1" y="493.4" width="3.5" height="3" fill="rgb(150,150,150)"/><rect x="408.3" y="492.2" width="3" height="3" fill="rgb(210,210,210)"/><rect x="340.1" y="515.3" width="3.5" height="2" fill="rgb(185,185,185)"/><rect x="388.8" y="512.0" width="3.5" height="3" fill="rgb(200,200,200)"/><rect x="445.9" y="529.7" width="3.5" height="3" fill="rgb(150,150,150)"/><rect x="538.0" y="533.5" width="3.5" height="2" fill="rgb(150,150,150)"/><rect x="554.4" y="515.5" width="3.5" height="2.5" fill="rgb(185,185,185)"/><rect x="555.7" y="422.1" width="4" height="2" fill="rgb(210,210,210)"/><rect x="590.7" y="407.5" width="4" height="2" fill="rgb(200,200,200)"/><rect x="447.5" y="298.5" width="3" height="3" fill="rgb(200,200,200)"/><rect x="461.0" y="302.5" width="4" height="3" fill="rgb(210,210,210)"/><rect x="434.2" y="315.5" width="3.5" height="3" fill="rgb(150,150,150)"/><rect x="423.0" y="321.0" width="4" height="2" fill="rgb(185,185,185)"/><rect x="445.0" y="320.5" width="4" height="3" fill="rgb(200,200,200)"/><rect x="468.5" y="326.8" width="3" height="2.5" fill="rgb(185,185,185)"/><rect x="476.0" y="345.8" width="4" height="2.5" fill="rgb(200,200,200)"/><rect x="493.5" y="310.0" width="3" height="2" fill="rgb(210,210,210)"/><rect x="498.2" y="314.5" width="3.5" height="3" fill="rgb(185,185,185)"/><rect x="517.0" y="295.0" width="4" height="2" fill="rgb(170,170,170)"/><rect x="526.2" y="291.5" width="3.5" height="3" fill="rgb(185,185,185)"/><rect x="543.5" y="286.5" width="3" height="3" fill="rgb(210,210,210)"/><rect x="415.5" y="269.5" width="3" height="3" fill="rgb(170,170,170)"/><rect x="384.0" y="270.5" width="4" height="3" fill="rgb(185,185,185)"/><rect x="345.5" y="319.0" width="3" height="2" fill="rgb(185,185,185)"/><rect x="598.5" y="293.8" width="3" height="2.5" fill="rgb(185,185,185)"/><rect x="573.5" y="403.5" width="3" height="3" fill="rgb(150,150,150)"/><rect x="594.5" y="405.8" width="3" height="2.5" fill="rgb(150,150,150)"/><rect x="465.5" y="424.8" width="3" height="2.5" fill="rgb(170,170,170)"/><rect x="451.2" y="347.8" width="3.5" height="2.5" fill="rgb(185,185,185)"/><rect x="446.5" y="329.5" width="3" height="3" fill="rgb(170,170,170)"/><rect x="428.2" y="340.0" width="3.5" height="2" fill="rgb(150,150,150)"/><rect x="410.2" y="351.0" width="3.5" height="2" fill="rgb(200,200,200)"/><rect x="444.2" y="363.8" width="3.5" height="2.5" fill="rgb(150,150,150)"/><rect x="459.0" y="359.5" width="4" height="3" fill="rgb(170,170,170)"/><rect x="495.2" y="367.0" width="3.5" height="2" fill="rgb(185,185,185)"/><rect x="538.2" y="351.5" width="3.5" height="3" fill="rgb(170,170,170)"/><rect x="549.5" y="352.5" width="3" height="3" fill="rgb(200,200,200)"/><rect x="557.2" y="353.5" width="3.5" height="3" fill="rgb(170,170,170)"/><rect x="496.0" y="297.5" width="4" height="3" fill="rgb(210,210,210)"/><rect x="518.5" y="325.5" width="3" height="3" fill="rgb(200,200,200)"/><rect x="423.5" y="280.5" width="3" height="3" fill="rgb(210,210,210)"/><rect x="436.0" y="293.0" width="4" height="2" fill="rgb(170,170,170)"/><rect x="454.2" y="296.8" width="3.5" height="2.5" fill="rgb(200,200,200)"/><rect x="383.1" y="289.6" width="3.4" height="3" fill="rgb(70,70,70)"/><rect x="396.2" y="301.2" width="3.4" height="3" fill="rgb(90,90,90)"/><rect x="382.3" y="304.5" width="3.4" height="3" fill="rgb(90,90,90)"/><rect x="418.9" y="275.1" width="3.4" height="3" fill="rgb(40,40,40)"/><rect x="399.5" y="286.7" width="3.4" height="3" fill="rgb(70,70,70)"/><rect x="460.0" y="317.2" width="3.4" height="3" fill="rgb(40,40,40)"/><rect x="468.1" y="315.6" width="3.4" height="3" fill="rgb(70,70,70)"/><rect x="455.1" y="325.8" width="3.4" height="3" fill="rgb(90,90,90)"/><rect x="412.3" y="333.7" width="3.4" height="3" fill="rgb(90,90,90)"/><rect x="439.4" y="335.7" width="3.4" height="3" fill="rgb(90,90,90)"/><rect x="461.2" y="338.0" width="3.4" height="3" fill="rgb(40,40,40)"/><rect x="494.1" y="337.5" width="3.4" height="3" fill="rgb(70,70,70)"/><rect x="512.1" y="329.8" width="3.4" height="3" fill="rgb(70,70,70)"/><rect x="494.2" y="317.4" width="3.4" height="3" fill="rgb(70,70,70)"/><rect x="437.4" y="350.1" width="3.4" height="3" fill="rgb(70,70,70)"/><rect x="429.3" y="352.5" width="3.4" height="3" fill="rgb(40,40,40)"/><rect x="505.4" y="352.4" width="3.4" height="3" fill="rgb(90,90,90)"/><rect x="512.1" y="350.4" width="3.4" height="3" fill="rgb(70,70,70)"/><rect x="360.2" y="352.2" width="3.4" height="3" fill="rgb(90,90,90)"/><rect x="550.3" y="300.2" width="3.4" height="3" fill="rgb(90,90,90)"/><rect x="581.1" y="292.3" width="3.4" height="3" fill="rgb(90,90,90)"/><rect x="562.7" y="308.8" width="3.4" height="3" fill="rgb(40,40,40)"/><rect x="512.5" y="371.5" width="3.4" height="3" fill="rgb(90,90,90)"/><rect x="450.5" y="376.5" width="3.4" height="3" fill="rgb(70,70,70)"/><rect x="408.0" y="341.1" width="3.4" height="3" fill="rgb(40,40,40)"/><circle cx="476.6" cy="258.1" r="2.5" fill="#4ba54b" stroke="#2a692e" stroke-width="1"/><circle cx="476.6" cy="258.3" r="0.9" fill="#347c37"/><circle cx="459.1" cy="276.1" r="2.5" fill="#4ba54b" stroke="#2a692e" stroke-width="1"/><circle cx="459.1" cy="276.3" r="0.9" fill="#347c37"/><circle cx="473.3" cy="288.3" r="2.5" fill="#4ba54b" stroke="#2a692e" stroke-width="1"/><circle cx="473.3" cy="288.5" r="0.9" fill="#347c37"/><circle cx="457.5" cy="290.8" r="2.5" fill="#4ba54b" stroke="#2a692e" stroke-width="1"/><circle cx="457.5" cy="291.0" r="0.9" fill="#347c37"/><circle cx="492.0" cy="290.6" r="2.5" fill="#4ba54b" stroke="#2a692e" stroke-width="1"/><circle cx="492.0" cy="290.8" r="0.9" fill="#347c37"/><circle cx="476.8" cy="294.4" r="2.5" fill="#4ba54b" stroke="#2a692e" stroke-width="1"/><circle cx="476.8" cy="294.6" r="0.9" fill="#347c37"/><circle cx="479.6" cy="301.0" r="2.5" fill="#4ba54b" stroke="#2a692e" stroke-width="1"/><circle cx="479.6" cy="301.2" r="0.9" fill="#347c37"/><circle cx="402.0" cy="308.6" r="2.5" fill="#4ba54b" stroke="#2a692e" stroke-width="1"/><circle cx="402.0" cy="308.8" r="0.9" fill="#347c37"/><circle cx="459.8" cy="312.4" r="2.5" fill="#4ba54b" stroke="#2a692e" stroke-width="1"/><circle cx="459.8" cy="312.6" r="0.9" fill="#347c37"/><circle cx="493.4" cy="311.9" r="2.5" fill="#4ba54b" stroke="#2a692e" stroke-width="1"/><circle cx="493.4" cy="312.1" r="0.9" fill="#347c37"/><circle cx="547.1" cy="309.6" r="2.5" fill="#4ba54b" stroke="#2a692e" stroke-width="1"/><circle cx="547.1" cy="309.8" r="0.9" fill="#347c37"/><circle cx="533.4" cy="319.2" r="2.5" fill="#4ba54b" stroke="#2a692e" stroke-width="1"/><circle cx="533.4" cy="319.4" r="0.9" fill="#347c37"/><circle cx="401.3" cy="323.0" r="2.5" fill="#4ba54b" stroke="#2a692e" stroke-width="1"/><circle cx="401.3" cy="323.2" r="0.9" fill="#347c37"/><circle cx="405.3" cy="328.8" r="2.5" fill="#4ba54b" stroke="#2a692e" stroke-width="1"/><circle cx="405.3" cy="329.0" r="0.9" fill="#347c37"/><circle cx="420.3" cy="326.3" r="2.5" fill="#4ba54b" stroke="#2a692e" stroke-width="1"/><circle cx="420.3" cy="326.5" r="0.9" fill="#347c37"/><circle cx="491.0" cy="326.6" r="2.5" fill="#4ba54b" stroke="#2a692e" stroke-width="1"/><circle cx="491.0" cy="326.8" r="0.9" fill="#347c37"/><circle cx="528.1" cy="327.6" r="2.5" fill="#4ba54b" stroke="#2a692e" stroke-width="1"/><circle cx="528.1" cy="327.8" r="0.9" fill="#347c37"/><circle cx="546.8" cy="329.8" r="2.5" fill="#4ba54b" stroke="#2a692e" stroke-width="1"/><circle cx="546.8" cy="330.0" r="0.9" fill="#347c37"/><circle cx="580.3" cy="324.3" r="2.5" fill="#4ba54b" stroke="#2a692e" stroke-width="1"/><circle cx="580.3" cy="324.5" r="0.9" fill="#347c37"/><circle cx="578.6" cy="339.3" r="2.5" fill="#4ba54b" stroke="#2a692e" stroke-width="1"/><circle cx="578.6" cy="339.5" r="0.9" fill="#347c37"/><circle cx="450.2" cy="335.4" r="2.5" fill="#4ba54b" stroke="#2a692e" stroke-width="1"/><circle cx="450.2" cy="335.6" r="0.9" fill="#347c37"/><circle cx="453.2" cy="335.4" r="2.5" fill="#4ba54b" stroke="#2a692e" stroke-width="1"/><circle cx="453.2" cy="335.6" r="0.9" fill="#347c37"/><circle cx="486.0" cy="334.4" r="2.5" fill="#4ba54b" stroke="#2a692e" stroke-width="1"/><circle cx="486.0" cy="334.6" r="0.9" fill="#347c37"/><circle cx="488.8" cy="336.4" r="2.5" fill="#4ba54b" stroke="#2a692e" stroke-width="1"/><circle cx="488.8" cy="336.6" r="0.9" fill="#347c37"/><circle cx="426.1" cy="339.3" r="2.5" fill="#4ba54b" stroke="#2a692e" stroke-width="1"/><circle cx="426.1" cy="339.5" r="0.9" fill="#347c37"/><circle cx="437.3" cy="344.6" r="2.5" fill="#4ba54b" stroke="#2a692e" stroke-width="1"/><circle cx="437.3" cy="344.8" r="0.9" fill="#347c37"/><circle cx="421.3" cy="347.8" r="2.5" fill="#4ba54b" stroke="#2a692e" stroke-width="1"/><circle cx="421.3" cy="348.0" r="0.9" fill="#347c37"/><circle cx="469.7" cy="353.5" r="2.5" fill="#4ba54b" stroke="#2a692e" stroke-width="1"/><circle cx="469.7" cy="353.7" r="0.9" fill="#347c37"/><circle cx="416.8" cy="356.7" r="2.5" fill="#4ba54b" stroke="#2a692e" stroke-width="1"/><circle cx="416.8" cy="356.9" r="0.9" fill="#347c37"/><circle cx="454.2" cy="356.5" r="2.5" fill="#4ba54b" stroke="#2a692e" stroke-width="1"/><circle cx="454.2" cy="356.7" r="0.9" fill="#347c37"/><circle cx="487.0" cy="356.3" r="2.5" fill="#4ba54b" stroke="#2a692e" stroke-width="1"/><circle cx="487.0" cy="356.5" r="0.9" fill="#347c37"/><circle cx="435.7" cy="359.6" r="2.5" fill="#4ba54b" stroke="#2a692e" stroke-width="1"/><circle cx="435.7" cy="359.8" r="0.9" fill="#347c37"/><circle cx="472.3" cy="360.1" r="2.5" fill="#4ba54b" stroke="#2a692e" stroke-width="1"/><circle cx="472.3" cy="360.3" r="0.9" fill="#347c37"/><circle cx="439.0" cy="365.9" r="2.5" fill="#4ba54b" stroke="#2a692e" stroke-width="1"/><circle cx="439.0" cy="366.1" r="0.9" fill="#347c37"/><circle cx="526.5" cy="362.9" r="2.5" fill="#4ba54b" stroke="#2a692e" stroke-width="1"/><circle cx="526.5" cy="363.1" r="0.9" fill="#347c37"/><circle cx="511.4" cy="366.4" r="2.5" fill="#4ba54b" stroke="#2a692e" stroke-width="1"/><circle cx="511.4" cy="366.6" r="0.9" fill="#347c37"/><circle cx="415.4" cy="370.7" r="2.5" fill="#4ba54b" stroke="#2a692e" stroke-width="1"/><circle cx="415.4" cy="370.9" r="0.9" fill="#347c37"/><circle cx="423.6" cy="368.4" r="2.5" fill="#4ba54b" stroke="#2a692e" stroke-width="1"/><circle cx="423.6" cy="368.6" r="0.9" fill="#347c37"/><circle cx="485.0" cy="371.0" r="2.5" fill="#4ba54b" stroke="#2a692e" stroke-width="1"/><circle cx="485.0" cy="371.2" r="0.9" fill="#347c37"/><circle cx="522.8" cy="371.2" r="2.5" fill="#4ba54b" stroke="#2a692e" stroke-width="1"/><circle cx="522.8" cy="371.4" r="0.9" fill="#347c37"/><circle cx="434.2" cy="374.3" r="2.5" fill="#4ba54b" stroke="#2a692e" stroke-width="1"/><circle cx="434.2" cy="374.5" r="0.9" fill="#347c37"/><circle cx="461.3" cy="375.8" r="2.5" fill="#4ba54b" stroke="#2a692e" stroke-width="1"/><circle cx="461.3" cy="376.0" r="0.9" fill="#347c37"/><circle cx="506.0" cy="374.5" r="2.5" fill="#4ba54b" stroke="#2a692e" stroke-width="1"/><circle cx="506.0" cy="374.7" r="0.9" fill="#347c37"/><circle cx="479.4" cy="379.5" r="2.5" fill="#4ba54b" stroke="#2a692e" stroke-width="1"/><circle cx="479.4" cy="379.7" r="0.9" fill="#347c37"/><circle cx="437.0" cy="380.9" r="2.5" fill="#4ba54b" stroke="#2a692e" stroke-width="1"/><circle cx="437.0" cy="381.1" r="0.9" fill="#347c37"/><circle cx="465.4" cy="382.9" r="2.5" fill="#4ba54b" stroke="#2a692e" stroke-width="1"/><circle cx="465.4" cy="383.1" r="0.9" fill="#347c37"/><circle cx="508.5" cy="381.3" r="2.5" fill="#4ba54b" stroke="#2a692e" stroke-width="1"/><circle cx="508.5" cy="381.5" r="0.9" fill="#347c37"/><circle cx="376.9" cy="385.9" r="2.5" fill="#4ba54b" stroke="#2a692e" stroke-width="1"/><circle cx="376.9" cy="386.1" r="0.9" fill="#347c37"/><circle cx="412.9" cy="386.4" r="2.5" fill="#4ba54b" stroke="#2a692e" stroke-width="1"/><circle cx="412.9" cy="386.6" r="0.9" fill="#347c37"/><circle cx="450.2" cy="385.7" r="2.5" fill="#4ba54b" stroke="#2a692e" stroke-width="1"/><circle cx="450.2" cy="385.9" r="0.9" fill="#347c37"/><circle cx="483.5" cy="385.2" r="2.5" fill="#4ba54b" stroke="#2a692e" stroke-width="1"/><circle cx="483.5" cy="385.4" r="0.9" fill="#347c37"/><circle cx="432.4" cy="389.5" r="2.5" fill="#4ba54b" stroke="#2a692e" stroke-width="1"/><circle cx="432.4" cy="389.7" r="0.9" fill="#347c37"/><circle cx="460.1" cy="390.2" r="2.5" fill="#4ba54b" stroke="#2a692e" stroke-width="1"/><circle cx="460.1" cy="390.4" r="0.9" fill="#347c37"/><circle cx="468.4" cy="389.5" r="2.5" fill="#4ba54b" stroke="#2a692e" stroke-width="1"/><circle cx="468.4" cy="389.7" r="0.9" fill="#347c37"/><circle cx="488.5" cy="392.7" r="2.5" fill="#4ba54b" stroke="#2a692e" stroke-width="1"/><circle cx="488.5" cy="392.9" r="0.9" fill="#347c37"/><circle cx="463.2" cy="397.1" r="2.5" fill="#4ba54b" stroke="#2a692e" stroke-width="1"/><circle cx="463.2" cy="397.3" r="0.9" fill="#347c37"/><circle cx="396.2" cy="403.4" r="2.5" fill="#4ba54b" stroke="#2a692e" stroke-width="1"/><circle cx="396.2" cy="403.6" r="0.9" fill="#347c37"/><circle cx="431.0" cy="403.9" r="2.5" fill="#4ba54b" stroke="#2a692e" stroke-width="1"/><circle cx="431.0" cy="404.1" r="0.9" fill="#347c37"/><circle cx="473.5" cy="402.3" r="2.5" fill="#4ba54b" stroke="#2a692e" stroke-width="1"/><circle cx="473.5" cy="402.5" r="0.9" fill="#347c37"/><circle cx="502.8" cy="404.6" r="2.5" fill="#4ba54b" stroke="#2a692e" stroke-width="1"/><circle cx="502.8" cy="404.8" r="0.9" fill="#347c37"/><circle cx="465.5" cy="419.4" r="2.5" fill="#4ba54b" stroke="#2a692e" stroke-width="1"/><circle cx="465.5" cy="419.6" r="0.9" fill="#347c37"/><circle cx="520.1" cy="421.7" r="2.5" fill="#4ba54b" stroke="#2a692e" stroke-width="1"/><circle cx="520.1" cy="421.9" r="0.9" fill="#347c37"/><circle cx="537.8" cy="440.4" r="2.5" fill="#4ba54b" stroke="#2a692e" stroke-width="1"/><circle cx="537.8" cy="440.6" r="0.9" fill="#347c37"/><circle cx="537.6" cy="477.4" r="2.5" fill="#4ba54b" stroke="#2a692e" stroke-width="1"/><circle cx="537.6" cy="477.6" r="0.9" fill="#347c37"/><circle cx="492.1" cy="275.4" r="2.5" fill="#7d9fac" stroke="#4f7384" stroke-width="1"/><circle cx="490.5" cy="312.8" r="2.5" fill="#7d9fac" stroke="#4f7384" stroke-width="1"/><circle cx="531.1" cy="327.1" r="2.5" fill="#7d9fac" stroke="#4f7384" stroke-width="1"/><circle cx="481.1" cy="344.3" r="2.5" fill="#7d9fac" stroke="#4f7384" stroke-width="1"/><circle cx="506.5" cy="367.7" r="2.5" fill="#7d9fac" stroke="#4f7384" stroke-width="1"/><circle cx="378.4" cy="421.9" r="2.5" fill="#7d9fac" stroke="#4f7384" stroke-width="1"/><circle cx="520.4" cy="494.6" r="2.5" fill="#7d9fac" stroke="#4f7384" stroke-width="1"/><circle cx="503.6" cy="512.6" r="2.5" fill="#7d9fac" stroke="#4f7384" stroke-width="1"/><path stroke="#ff7f50" stroke-width="1.6" fill="none" d="M109.6 607.5L109.4 630"/><path fill="#ff7f50" d="M107.4 629L111.4 629L109.4 634Z"/><path stroke="#0000ff" stroke-width="1.8" fill="none" d="M110 607.2L132 607.2"/><path fill="#0000ff" d="M131 605.3L136.3 607.2L131 609.1Z"/><circle cx="112.2" cy="610.8" r="1.7" fill="#2ecc71"/></svg>
<span class="t" style="font-size:11px;font-style:italic;left:114.66px;top:597px;">b*</span>
<span class="t" style="font-size:11px;font-style:italic;left:134.66px;top:594px;">c*</span>
<span class="t" style="font-size:11px;font-style:italic;left:112.56px;top:615px;">a*</span>
<div class="a" style="left:23.20px;top:660.00px;width:122.50px;height:25.70px;background:#b3b6bb;border-radius:4px 4px 0 0;border-bottom:2.9px solid #2eaaff;box-sizing:border-box;"></div>
<span class="t" style="font-size:13.5px;transform:scaleX(1.0154);transform-origin:0 0;left:26.60px;top:666px;">Lattice Parameters</span>
<div class="a" style="left:148.20px;top:662.10px;width:126.80px;height:21.80px;background:#c1c4c9;border-radius:4px 4px 0 0;"></div>
<span class="t" style="font-size:13.5px;transform:scaleX(1.0338);transform-origin:0 0;left:151.77px;top:667px;">Sample Orientation</span>
<div class="a" style="left:21.00px;top:686.00px;width:889.00px;height:86.00px;border:1px solid #bcbfc4;box-sizing:border-box;border-radius:4px;"></div>
<span class="t" style="font-size:13.5px;transform:scaleX(1.1032);transform-origin:0 0;left:38.40px;top:706px;">a:</span>
<div class="a" style="left:63.00px;top:699.00px;width:246.00px;height:26.00px;background:#fafafa;border:1px solid #bcbfc4;box-sizing:border-box;border-radius:4px;"></div>
<span class="t" style="font-size:13.5px;transform:scaleX(0.9982);transform-origin:0 0;left:69.59px;top:706px;">9.45987</span>
<span class="t" style="font-size:13.5px;transform:scaleX(1.1354);transform-origin:0 0;left:319.38px;top:706px;">b:</span>
<div class="a" style="left:344.00px;top:699.00px;width:246.00px;height:26.00px;background:#fafafa;border:1px solid #bcbfc4;box-sizing:border-box;border-radius:4px;"></div>
<span class="t" style="font-size:13.5px;transform:scaleX(0.9982);transform-origin:0 0;left:350.89px;top:706px;">9.45987</span>
<span class="t" style="font-size:13.5px;transform:scaleX(1.0826);transform-origin:0 0;left:600.42px;top:706px;">c:</span>
<div class="a" style="left:624.00px;top:699.00px;width:246.00px;height:26.00px;background:#fafafa;border:1px solid #bcbfc4;box-sizing:border-box;border-radius:4px;"></div>
<span class="t" style="font-size:13.5px;transform:scaleX(0.9982);transform-origin:0 0;left:630.39px;top:706px;">9.45987</span>
<span class="t" style="font-size:13.5px;left:880.12px;top:706px;">Å</span>
<span class="t" style="font-size:13.5px;transform:scaleX(1.0654);transform-origin:0 0;left:38.42px;top:738px;">α:</span>
<div class="a" style="left:63.00px;top:731.00px;width:246.00px;height:26.00px;background:#fafafa;border:1px solid #bcbfc4;box-sizing:border-box;border-radius:4px;"></div>
<span class="t" style="font-size:13.5px;transform:scaleX(0.9968);transform-origin:0 0;left:69.59px;top:738px;">90.000</span>
<span class="t" style="font-size:13.5px;transform:scaleX(1.1111);transform-origin:0 0;left:319.32px;top:738px;">β:</span>
<div class="a" style="left:344.00px;top:731.00px;width:246.00px;height:26.00px;background:#fafafa;border:1px solid #bcbfc4;box-sizing:border-box;border-radius:4px;"></div>
<span class="t" style="font-size:13.5px;transform:scaleX(0.9968);transform-origin:0 0;left:350.89px;top:738px;">90.000</span>
<span class="t" style="font-size:13.5px;transform:scaleX(1.0199);transform-origin:0 0;left:601.00px;top:738px;">γ:</span>
<div class="a" style="left:624.00px;top:731.00px;width:246.00px;height:26.00px;background:#fafafa;border:1px solid #bcbfc4;box-sizing:border-box;border-radius:4px;"></div>
<span class="t" style="font-size:13.5px;transform:scaleX(0.9968);transform-origin:0 0;left:630.39px;top:738px;">90.000</span>
<span class="t" style="font-size:13.5px;left:880.83px;top:739px;">°</span>
<div class="a" style="left:21.00px;top:778.00px;width:889.00px;height:192.00px;border:1px solid #bcbfc4;box-sizing:border-box;border-radius:4px;"></div>
<span class="t" style="font-size:14px;font-family:'Liberation Mono',monospace;left:28.10px;top:782px;">BinMD started (child)</span>
<span class="t" style="font-size:14px;font-family:'Liberation Mono',monospace;left:28.10px;top:799px;">BinMD successful, Duration 0.02 seconds</span>
<span class="t" style="font-size:14px;font-family:'Liberation Mono',monospace;left:28.10px;top:816px;">DeleteWorkspace started (child)</span>
<span class="t" style="font-size:14px;font-family:'Liberation Mono',monospace;left:28.10px;top:833px;">DeleteWorkspace successful, Duration 0.00 seconds</span>
<span class="t" style="font-size:14px;font-family:'Liberation Mono',monospace;left:28.10px;top:850px;">ConvertQtoHKLMDHisto successful, Duration 0.26 seconds</span>
<span class="t" style="font-size:14px;font-family:'Liberation Mono',monospace;left:28.10px;top:867px;">CompactMD started</span>
<span class="t" style="font-size:14px;font-family:'Liberation Mono',monospace;left:28.10px;top:884px;">Rounding max from: 4.60597 to the nearest whole width at: 4.60599</span>
<span class="t" style="font-size:14px;font-family:'Liberation Mono',monospace;left:28.10px;top:901px;">Rounding min from: -0.108507 to the nearest whole width at: -0.158358</span>
<span class="t" style="font-size:14px;font-family:'Liberation Mono',monospace;left:28.10px;top:918px;">Rounding max from: 12.5044 to the nearest whole width at: 12.5044</span>
<span class="t" style="font-size:14px;font-family:'Liberation Mono',monospace;left:28.10px;top:935px;">CompactMD successful, Duration 0.07 seconds</span>
<svg class="a" style="left:894.40px;top:787.50px;" width="9.00" height="5.00" viewBox="0 0 9 5"><path fill="#c9cbcf" d="M0 5H9L4.5 0Z"/></svg>
<svg class="a" style="left:894.40px;top:954.50px;" width="9.00" height="5.00" viewBox="0 0 9 5"><path fill="#c9cbcf" d="M0 0H9L4.5 5Z"/></svg>
<div class="a" style="left:893.60px;top:797.00px;width:10.70px;height:153.60px;background:#fbfbfb;border:1px solid #b4b7bc;box-sizing:border-box;border-radius:5px;"></div>
<div class="a" style="left:894.20px;top:939.80px;width:9.60px;height:10.20px;background:#a9acb1;border-radius:5px;"></div>
<div class="a" style="left:21.00px;top:976.00px;width:889.00px;height:33.00px;background:#c1c4c9;"></div>
<span class="t" style="font-size:13.5px;transform:scaleX(1.0290);transform-origin:0 0;left:26.71px;top:987px;">Complete!</span>
<div class="a" style="left:458.00px;top:980.00px;width:432.00px;height:26.00px;background:#fafafa;border-radius:3.5px;"></div>
<span class="t" style="font-size:13.5px;transform:scaleX(1.0507);transform-origin:0 0;left:657.07px;top:987px;">Done</span>
<svg class="a" style="left:0.00px;top:0.00px;" width="1766.00" height="1030.00" viewBox="0 0 1766 1030"><path stroke="#4a4e56" stroke-width="1.1" fill="none" d="M899.2 1008.2L909.6 998.2M903 1008.2L909.6 1001.8M906.7 1008.2L909.6 1005.4"/></svg>
<div class="a" style="left:918.10px;top:55.20px;width:78.70px;height:21.50px;background:#c1c4c9;border-radius:4px 4px 0 0;"></div>
<span class="t" style="font-size:13.5px;transform:scaleX(1.0243);transform-origin:0 0;left:921.29px;top:60px;">Parameters</span>
<div class="a" style="left:999.10px;top:55.20px;width:43.60px;height:21.50px;background:#c1c4c9;border-radius:4px 4px 0 0;"></div>
<span class="t" style="font-size:13.5px;transform:scaleX(0.9756);transform-origin:0 0;left:1002.25px;top:60px;">Peaks</span>
<div class="a" style="left:1045.20px;top:53.20px;width:42.60px;height:25.60px;background:#b3b6bb;border-radius:4px 4px 0 0;border-bottom:2.9px solid #2eaaff;box-sizing:border-box;"></div>
<span class="t" style="font-size:13.5px;transform:scaleX(0.9659);transform-origin:0 0;left:1049.10px;top:59px;">Views</span>
<div class="a" style="left:1090.10px;top:55.20px;width:78.70px;height:21.50px;background:#c1c4c9;border-radius:4px 4px 0 0;"></div>
<span class="t" style="font-size:13.5px;transform:scaleX(1.0854);transform-origin:0 0;left:1093.53px;top:60px;">Modulation</span>
<div class="a" style="left:916.00px;top:79.00px;width:829.00px;height:930.00px;border:1px solid #bcbfc4;box-sizing:border-box;border-radius:4px;"></div>
<div class="a" style="left:922.00px;top:83.20px;width:68.70px;height:25.60px;background:#b3b6bb;border-radius:4px 4px 0 0;border-bottom:2.9px solid #2eaaff;box-sizing:border-box;"></div>
<span class="t" style="font-size:13.5px;transform:scaleX(0.9595);transform-origin:0 0;left:926.22px;top:89px;">Slice View</span>
<div class="a" style="left:993.20px;top:85.20px;width:93.70px;height:21.60px;background:#c1c4c9;border-radius:4px 4px 0 0;"></div>
<span class="t" style="font-size:13.5px;transform:scaleX(1.0163);transform-origin:0 0;left:997.00px;top:90px;">Detector View</span>
<div class="a" style="left:920.00px;top:109.00px;width:821.00px;height:896.00px;border:1px solid #bcbfc4;box-sizing:border-box;border-radius:4px;"></div>
<span class="t" style="font-size:13.5px;left:1082.15px;top:127px;">h</span>
<span class="t" style="font-size:13.5px;left:1340.03px;top:127px;">k</span>
<span class="t" style="font-size:13.5px;left:1598.80px;top:127px;">l</span>
<span class="t" style="font-size:13.5px;transform:scaleX(1.1388);transform-origin:0 0;left:937.15px;top:157px;">1:</span>
<div class="a" style="left:961.00px;top:150.00px;width:252.00px;height:26.00px;background:#fafafa;border:1px solid #bcbfc4;box-sizing:border-box;border-radius:4px;"></div>
<span class="t" style="font-size:13.5px;transform:scaleX(1.0700);transform-origin:0 0;left:966.92px;top:157px;">1</span>
<div class="a" style="left:1219.00px;top:150.00px;width:251.00px;height:26.00px;background:#fafafa;border:1px solid #bcbfc4;box-sizing:border-box;border-radius:4px;"></div>
<span class="t" style="font-size:13.5px;transform:scaleX(1.0700);transform-origin:0 0;left:1225.49px;top:157px;">0</span>
<div class="a" style="left:1476.00px;top:150.00px;width:252.00px;height:26.00px;background:#fafafa;border:1px solid #bcbfc4;box-sizing:border-box;border-radius:4px;"></div>
<span class="t" style="font-size:13.5px;transform:scaleX(1.0700);transform-origin:0 0;left:1482.49px;top:157px;">0</span>
<span class="t" style="font-size:13.5px;transform:scaleX(1.0978);transform-origin:0 0;left:937.56px;top:189px;">2:</span>
<div class="a" style="left:961.00px;top:182.00px;width:252.00px;height:26.00px;background:#fafafa;border:1px solid #bcbfc4;box-sizing:border-box;border-radius:4px;"></div>
<span class="t" style="font-size:13.5px;transform:scaleX(1.0700);transform-origin:0 0;left:967.49px;top:189px;">0</span>
<div class="a" style="left:1219.00px;top:182.00px;width:251.00px;height:26.00px;background:#fafafa;border:1px solid #bcbfc4;box-sizing:border-box;border-radius:4px;"></div>
<span class="t" style="font-size:13.5px;transform:scaleX(1.0700);transform-origin:0 0;left:1224.92px;top:189px;">1</span>
<div class="a" style="left:1476.00px;top:182.00px;width:252.00px;height:26.00px;background:#fafafa;border:1px solid #bcbfc4;box-sizing:border-box;border-radius:4px;"></div>
<span class="t" style="font-size:13.5px;transform:scaleX(1.0700);transform-origin:0 0;left:1482.49px;top:189px;">0</span>
<span class="t" style="font-size:13.5px;transform:scaleX(1.0746);transform-origin:0 0;left:937.79px;top:221px;">3:</span>
<div class="a" style="left:961.00px;top:214.00px;width:252.00px;height:26.00px;background:#fafafa;border:1px solid #bcbfc4;box-sizing:border-box;border-radius:4px;"></div>
<span class="t" style="font-size:13.5px;transform:scaleX(1.0700);transform-origin:0 0;left:967.49px;top:221px;">0</span>
<div class="a" style="left:1219.00px;top:214.00px;width:251.00px;height:26.00px;background:#fafafa;border:1px solid #bcbfc4;box-sizing:border-box;border-radius:4px;"></div>
<span class="t" style="font-size:13.5px;transform:scaleX(1.0700);transform-origin:0 0;left:1225.49px;top:221px;">0</span>
<div class="a" style="left:1476.00px;top:214.00px;width:252.00px;height:26.00px;background:#fafafa;border:1px solid #bcbfc4;box-sizing:border-box;border-radius:4px;"></div>
<span class="t" style="font-size:13.5px;transform:scaleX(1.0700);transform-origin:0 0;left:1481.92px;top:221px;">1</span>
<div class="a" style="left:933.40px;top:249.40px;width:72.60px;height:21.20px;background:#ffff00;border-radius:3px;"></div>
<svg preserveAspectRatio="none" class="a" style="left:936.60px;top:253.00px;display:block;" width="12.80" height="13.80" viewBox="0 0 14 14"><path fill="#000" d="M0 2.6H9.6V0L14 3.4 9.6 6.8V4.2H0Z M14 9.8H4.4V7.2L0 10.6 4.4 14V11.4H14Z"/></svg>
<span class="t" style="font-size:13.5px;transform:scaleX(1.0199);transform-origin:0 0;left:952.81px;top:254px;">Convert</span>
<div class="a" style="left:1012.00px;top:246.00px;width:112.00px;height:29.00px;background:#ffff00;border:1px solid #bcbfc4;box-sizing:border-box;border-radius:4px;"></div>
<div class="a" style="left:1110.00px;top:247.00px;width:1.00px;height:27.00px;background:#c8c87a;"></div>
<div class="a" style="left:1020.20px;top:258.30px;width:10.30px;height:2.00px;background:#111;border-radius:1px;"></div>
<span class="t" style="font-size:13.5px;transform:scaleX(0.9940);transform-origin:0 0;left:1039.30px;top:255px;">Axis 1/2</span>
<svg class="a" style="left:1113.50px;top:258.55px;" width="7.00" height="3.50" viewBox="0 0 7 3.5"><path fill="#b9bac2" d="M0 0H7L3.5 3.5Z"/></svg>
<span class="t" style="font-size:13.5px;transform:scaleX(0.9599);transform-origin:0 0;left:1134.92px;top:255px;">Slice:</span>
<div class="a" style="left:1178.00px;top:247.00px;width:133.00px;height:26.00px;background:#ffff00;border:1px solid #bcbfc4;box-sizing:border-box;border-radius:4px;"></div>
<span class="t" style="font-size:13.5px;transform:scaleX(0.9933);transform-origin:0 0;left:1184.93px;top:254px;">0.0</span>
<span class="t" style="font-size:13.5px;transform:scaleX(0.9882);transform-origin:0 0;left:1322.23px;top:255px;">Thickness:</span>
<div class="a" style="left:1398.00px;top:247.00px;width:134.00px;height:26.00px;background:#fafafa;border:1px solid #bcbfc4;box-sizing:border-box;border-radius:4px;"></div>
<span class="t" style="font-size:13.5px;transform:scaleX(0.9160);transform-origin:0 0;left:1405.17px;top:254px;">0.1</span>
<span class="t" style="font-size:13.5px;transform:scaleX(1.0578);transform-origin:0 0;left:1543.20px;top:255px;">Width:</span>
<div class="a" style="left:1595.00px;top:247.00px;width:133.00px;height:26.00px;background:#fafafa;border:1px solid #bcbfc4;box-sizing:border-box;border-radius:4px;"></div>
<span class="t" style="font-size:13.5px;transform:scaleX(0.9903);transform-origin:0 0;left:1601.83px;top:254px;">0.05</span>
<div class="a" style="left:933.00px;top:280.90px;width:315.00px;height:33.10px;background:#c1c4c9;border-radius:4px;"></div>
<div class="a" style="left:1242.20px;top:280.80px;width:443.70px;height:33.20px;background:#fafafa;border:1px solid #c6c8cc;box-sizing:border-box;border-radius:4px;"></div>
<svg preserveAspectRatio="none" class="a" style="left:940.10px;top:291.80px;display:block;" width="21.00" height="17.20" viewBox="0 0 21 17.2"><path fill="none" stroke="#000" stroke-width="2.1" d="M.7 9.3L10.5 1.2 20.3 9.3"/><path fill="#000" d="M14.9 0H17.6V6.2L14.9 4Z M3 9.9L10.5 3.7 18 9.9V16.4Q18 17.2 17.2 17.2H12.4V11.4H8.5V17.2H3.8Q3 17.2 3 16.4Z"/></svg>
<svg preserveAspectRatio="none" class="a" style="left:974.90px;top:288.60px;display:block;" width="20.00" height="21.10" viewBox="0 0 20 21"><path fill="none" stroke="#5f5f5f" stroke-width="4.7" stroke-linecap="round" stroke-linejoin="miter" d="M17.6 10.5H5 M10.6 2.6L3.2 10.5 10.6 18.4"/></svg>
<svg preserveAspectRatio="none" class="a" style="left:1008.20px;top:288.60px;display:block;" width="20.00" height="21.10" viewBox="0 0 20 21"><path fill="none" stroke="#5f5f5f" stroke-width="4.7" stroke-linecap="round" stroke-linejoin="miter" d="M2.4 10.5H15 M9.4 2.6L16.8 10.5 9.4 18.4"/></svg>
<div class="a" style="left:1042.90px;top:290.90px;width:2.10px;height:13.70px;background:#6f7581;"></div>
<svg preserveAspectRatio="none" class="a" style="left:1058.90px;top:286.80px;display:block;" width="23.10" height="24.30" viewBox="0 0 24 24"><path fill="#000" d="M12 0L16.2 4.8H13.6V10.4H19.2V7.8L24 12 19.2 16.2V13.6H13.6V19.2H16.2L12 24 7.8 19.2H10.4V13.6H4.8V16.2L0 12 4.8 7.8V10.4H10.4V4.8H7.8Z"/></svg>
<svg preserveAspectRatio="none" class="a" style="left:1093.30px;top:288.00px;display:block;" width="22.30" height="21.90" viewBox="0 0 22.3 21.9"><circle cx="9.65" cy="9.55" r="8" fill="none" stroke="#000" stroke-width="3.3"/><path stroke="#000" stroke-width="3.7" stroke-linecap="round" d="M15.6 15.4L20.4 20"/></svg>
<svg preserveAspectRatio="none" class="a" style="left:1128.30px;top:290.60px;display:block;" width="20.70" height="18.60" viewBox="0 0 20.7 18.6"><path fill="#000" d="M0 1.7H20.7V3.3H0Z M0 8.3H20.7V9.9H0Z M0 15.3H20.7V16.9H0Z M3.8 0H8.5V5H3.8Z M12 6.6H16.9V11.6H12Z M5.6 13.6H10.1V18.6H5.6Z"/></svg>
<svg preserveAspectRatio="none" class="a" style="left:1159.90px;top:288.80px;display:block;" width="25.00" height="20.20" viewBox="0 0 25 20.2"><path fill="#000" d="M0 0H1.5V18.7H25V20.2H0Z"/><path fill="none" stroke="#000" stroke-width="3.4" stroke-linejoin="miter" d="M3.6 15.6L10.3 8.6 13.4 12.6 20.5 5.2"/><path fill="#000" d="M17.6 1.6H24.6V8.8Z"/></svg>
<div class="a" style="left:1197.00px;top:290.90px;width:2.10px;height:13.70px;background:#6f7581;"></div>
<svg preserveAspectRatio="none" class="a" style="left:1214.30px;top:288.80px;display:block;" width="20.20" height="20.20" viewBox="0 0 20 20"><path fill="#000" fill-rule="evenodd" d="M1.2 0H15.2L20 4.8V18.8Q20 20 18.8 20H1.2Q0 20 0 18.8V1.2Q0 0 1.2 0Z M1.8 1.8V18.2H3.4V11.6Q3.4 10.8 4.2 10.8H15.8Q16.6 10.8 16.6 11.6V18.2H18.2V5.5L14.5 1.8H14.2V6.8Q14.2 7.6 13.4 7.6H5.4Q4.6 7.6 4.6 6.8V1.8Z M5.2 12.6V18.2H14.8V12.6Z M9.4 1.8V5.8H12.2V1.8Z"/></svg>
<div class="a" style="left:933.00px;top:321.00px;width:753.00px;height:636.00px;background:#ffffff;"></div>
<div class="a" style="left:1696.00px;top:281.00px;width:6.00px;height:675.60px;background:#c0c3c7;"></div>
<div class="a" style="left:1692.00px;top:946.50px;width:15.00px;height:9.00px;background:#768b9b;border-radius:1.5px;"></div>
<div class="a" style="left:1717.00px;top:281.00px;width:6.00px;height:675.60px;background:#babdc2;"></div>
<div class="a" style="left:1718.00px;top:290.00px;width:4.00px;height:666.60px;background:#a0cbff;"></div>
<div class="a" style="left:1713.00px;top:282.30px;width:15.00px;height:9.20px;background:#768b9b;border-radius:1.5px;"></div>
<div class="a" style="left:933.00px;top:963.00px;width:261.00px;height:29.00px;background:#fafafa;border:1px solid #bcbfc4;box-sizing:border-box;border-radius:4px;"></div>
<div class="a" style="left:1180.00px;top:964.00px;width:1.00px;height:27.00px;background:#bcbfc4;"></div>
<div class="a" style="left:940.40px;top:974.90px;width:10.70px;height:2.00px;background:#111;border-radius:1px;"></div>
<span class="t" style="font-size:13.5px;transform:scaleX(1.0325);transform-origin:0 0;left:959.38px;top:972px;">Binary</span>
<svg class="a" style="left:1183.60px;top:975.25px;" width="7.00" height="3.50" viewBox="0 0 7 3.5"><path fill="#c3c5c9" d="M0 0H7L3.5 3.5Z"/></svg>
<div class="a" style="left:1200.00px;top:963.00px;width:261.00px;height:29.00px;background:#fafafa;border:1px solid #bcbfc4;box-sizing:border-box;border-radius:4px;"></div>
<div class="a" style="left:1447.00px;top:964.00px;width:1.00px;height:27.00px;background:#bcbfc4;"></div>
<div class="a" style="left:1207.40px;top:974.90px;width:10.60px;height:2.00px;background:#111;border-radius:1px;"></div>
<span class="t" style="font-size:13.5px;transform:scaleX(0.9877);transform-origin:0 0;left:1226.53px;top:972px;">μ±3×σ</span>
<svg class="a" style="left:1450.60px;top:975.25px;" width="7.00" height="3.50" viewBox="0 0 7 3.5"><path fill="#c3c5c9" d="M0 0H7L3.5 3.5Z"/></svg>
<div class="a" style="left:1467.00px;top:963.00px;width:261.00px;height:29.00px;background:#fafafa;border:1px solid #bcbfc4;box-sizing:border-box;border-radius:4px;"></div>
<div class="a" style="left:1714.00px;top:964.00px;width:1.00px;height:27.00px;background:#bcbfc4;"></div>
<div class="a" style="left:1474.60px;top:974.90px;width:10.80px;height:2.00px;background:#111;border-radius:1px;"></div>
<span class="t" style="font-size:13.5px;transform:scaleX(1.0290);transform-origin:0 0;left:1493.39px;top:972px;">Linear</span>
<svg class="a" style="left:1717.70px;top:975.25px;" width="7.00" height="3.50" viewBox="0 0 7 3.5"><path fill="#c3c5c9" d="M0 0H7L3.5 3.5Z"/></svg>
<svg class="a" style="left:0.00px;top:0.00px;pointer-events:none;" width="1766.00" height="1030.00" viewBox="0 0 1766 1030"><defs><clipPath id="axc"><rect x="1027.4" y="471.6" width="467.2" height="341.7"/></clipPath><linearGradient id="cbg" x1="0" y1="0" x2="0" y2="1"><stop offset="0" stop-color="#000"/><stop offset="1" stop-color="#fff"/></linearGradient><filter id="hz"><feGaussianBlur stdDeviation="7"/></filter></defs><g clip-path="url(#axc)"><path fill="#fbfbfb" filter="url(#hz)" d="M1234.5 469.5 L1140.0 523.5 L1067.1 585.5 L1028.5 639.5 L1028.5 690.5 L1099.5 747.5 L1180.5 782.5 L1315.5 809.5 L1275.0 728.5 L1266.9 647.5 L1264.2 566.5 L1253.4 499.5Z"/><path fill="#f6f6f6" d="M1385 809.5L1484 783L1484 786.5L1398 809.5Z"/><path stroke="#b2b2b2" stroke-width="1" d="M1045.50 471.6V813.3"/><path stroke="#b2b2b2" stroke-width="1" d="M1099.50 471.6V813.3"/><path stroke="#b2b2b2" stroke-width="1" d="M1153.50 471.6V813.3"/><path stroke="#b2b2b2" stroke-width="1" d="M1207.50 471.6V813.3"/><path stroke="#b2b2b2" stroke-width="1" d="M1261.50 471.6V813.3"/><path stroke="#b2b2b2" stroke-width="1" d="M1315.50 471.6V813.3"/><path stroke="#b2b2b2" stroke-width="1" d="M1369.50 471.6V813.3"/><path stroke="#b2b2b2" stroke-width="1" d="M1423.50 471.6V813.3"/><path stroke="#b2b2b2" stroke-width="1" d="M1478.50 471.6V813.3"/><path stroke="#b2b2b2" stroke-width="1" d="M1027.4 809.50H1494.6"/><path stroke="#b2b2b2" stroke-width="1" d="M1027.4 755.50H1494.6"/><path stroke="#b2b2b2" stroke-width="1" d="M1027.4 701.50H1494.6"/><path stroke="#b2b2b2" stroke-width="1" d="M1027.4 647.50H1494.6"/><path stroke="#b2b2b2" stroke-width="1" d="M1027.4 593.50H1494.6"/><path stroke="#b2b2b2" stroke-width="1" d="M1027.4 539.50H1494.6"/><path stroke="#b2b2b2" stroke-width="1" d="M1027.4 485.50H1494.6"/><ellipse cx="1206.7" cy="483.7" rx="2.0" ry="1.5" fill="rgb(10,10,10)"/><ellipse cx="1152.7" cy="537.7" rx="2.0" ry="1.5" fill="rgb(10,10,10)"/><ellipse cx="1206.7" cy="537.7" rx="2.0" ry="1.5" fill="rgb(10,10,10)"/><ellipse cx="1260.7" cy="537.7" rx="1.3" ry="0.9" fill="rgb(132,132,132)"/><ellipse cx="1098.7" cy="591.7" rx="2.0" ry="1.5" fill="rgb(10,10,10)"/><ellipse cx="1152.7" cy="591.7" rx="1.3" ry="0.9" fill="rgb(193,193,193)"/><ellipse cx="1206.7" cy="591.7" rx="1.3" ry="0.9" fill="rgb(206,206,206)"/><ellipse cx="1044.7" cy="645.7" rx="2.0" ry="1.5" fill="rgb(34,34,34)"/><ellipse cx="1098.7" cy="645.7" rx="2.0" ry="1.5" fill="rgb(10,10,10)"/><ellipse cx="1152.7" cy="645.7" rx="1.3" ry="0.9" fill="rgb(206,206,206)"/><ellipse cx="1206.7" cy="645.7" rx="1.3" ry="0.9" fill="rgb(218,218,218)"/><ellipse cx="1260.7" cy="645.7" rx="2.0" ry="1.5" fill="rgb(83,83,83)"/><ellipse cx="1098.7" cy="699.7" rx="2.0" ry="1.5" fill="rgb(59,59,59)"/><ellipse cx="1152.7" cy="699.7" rx="1.3" ry="0.9" fill="rgb(206,206,206)"/><ellipse cx="1206.7" cy="699.7" rx="2.0" ry="1.5" fill="rgb(34,34,34)"/><ellipse cx="1152.7" cy="753.7" rx="2.0" ry="1.5" fill="rgb(34,34,34)"/><ellipse cx="1206.7" cy="753.7" rx="2.0" ry="1.5" fill="rgb(34,34,34)"/><ellipse cx="1260.7" cy="753.7" rx="1.3" ry="0.9" fill="rgb(206,206,206)"/><ellipse cx="1314.7" cy="807.7" rx="2.0" ry="1.5" fill="rgb(59,59,59)"/><ellipse cx="1044.7" cy="699.7" rx="1.3" ry="0.9" fill="rgb(218,218,218)"/><ellipse cx="1260.7" cy="591.7" rx="1.3" ry="0.9" fill="rgb(230,230,230)"/><path stroke="#ececec" stroke-width="1.6" d="M1208.0 485.0l4.5 6.5"/><path stroke="#ececec" stroke-width="1.6" d="M1154.0 539.0l4.5 6.5"/><path stroke="#ececec" stroke-width="1.6" d="M1208.0 539.0l4.5 6.5"/><path stroke="#ececec" stroke-width="1.6" d="M1100.0 593.0l4.5 6.5"/><path stroke="#ececec" stroke-width="1.6" d="M1100.0 647.0l4.5 6.5"/><rect x="1179.5" y="565.0" width="2" height="1" fill="#e6e6e6"/><rect x="1233.5" y="565.0" width="2" height="1" fill="#e6e6e6"/><rect x="1125.5" y="619.0" width="2" height="1" fill="#e6e6e6"/><rect x="1179.5" y="673.0" width="2" height="1" fill="#e6e6e6"/><rect x="1125.5" y="673.0" width="2" height="1" fill="#e6e6e6"/><rect x="1179.5" y="727.0" width="2" height="1" fill="#e6e6e6"/><rect x="1071.5" y="619.0" width="2" height="1" fill="#e6e6e6"/><rect x="1233.5" y="781.0" width="2" height="1" fill="#e6e6e6"/><rect x="1287.5" y="781.0" width="2" height="1" fill="#e6e6e6"/><rect x="1233.5" y="673.0" width="2" height="1" fill="#e6e6e6"/><rect x="1125.5" y="727.0" width="2" height="1" fill="#e6e6e6"/></g><path stroke="#000" stroke-width="1" fill="none" d="M1045.50 471.6v4M1045.50 813.3v-4M1099.50 471.6v4M1099.50 813.3v-4M1153.50 471.6v4M1153.50 813.3v-4M1207.50 471.6v4M1207.50 813.3v-4M1261.50 471.6v4M1261.50 813.3v-4M1315.50 471.6v4M1315.50 813.3v-4M1369.50 471.6v4M1369.50 813.3v-4M1423.50 471.6v4M1423.50 813.3v-4M1478.50 471.6v4M1478.50 813.3v-4M1027.4 809.50h4M1494.6 809.50h-4M1027.4 755.50h4M1494.6 755.50h-4M1027.4 701.50h4M1494.6 701.50h-4M1027.4 647.50h4M1494.6 647.50h-4M1027.4 593.50h4M1494.6 593.50h-4M1027.4 539.50h4M1494.6 539.50h-4M1027.4 485.50h4M1494.6 485.50h-4"/><rect x="1027.4" y="471.6" width="467.2" height="341.7" fill="none" stroke="#000" stroke-width="1.1"/><rect x="1523.5" y="397.3" width="24.9" height="489.7" fill="url(#cbg)" stroke="#000" stroke-width="1.1"/><path stroke="#000" stroke-width="1" fill="none" d="M1548.9 866.50h2.7M1548.9 845.50h2.7M1548.9 824.50h2.7M1548.9 803.50h2.7M1548.9 782.50h4.5M1548.9 761.50h2.7M1548.9 740.50h2.7M1548.9 719.50h2.7M1548.9 698.50h2.7M1548.9 677.50h4.5M1548.9 657.50h2.7M1548.9 636.50h2.7M1548.9 615.50h2.7M1548.9 594.50h2.7M1548.9 573.50h4.5M1548.9 552.50h2.7M1548.9 531.50h2.7M1548.9 510.50h2.7M1548.9 489.50h2.7M1548.9 468.50h4.5M1548.9 448.50h2.7M1548.9 427.50h2.7M1548.9 406.50h2.7"/></svg>
<span class="t" style="font-size:14px;color:#000;transform:scaleX(1.1629);transform-origin:0 0;left:1031.70px;top:818px;">−12</span>
<span class="t" style="font-size:14px;color:#000;transform:scaleX(1.1557);transform-origin:0 0;left:1085.71px;top:818px;">−10</span>
<span class="t" style="font-size:14px;color:#000;transform:scaleX(1.1950);transform-origin:0 0;left:1143.92px;top:818px;">−8</span>
<span class="t" style="font-size:14px;color:#000;transform:scaleX(1.1950);transform-origin:0 0;left:1197.92px;top:818px;">−6</span>
<span class="t" style="font-size:14px;color:#000;transform:scaleX(1.1782);transform-origin:0 0;left:1251.93px;top:818px;">−4</span>
<span class="t" style="font-size:14px;color:#000;transform:scaleX(1.2007);transform-origin:0 0;left:1305.92px;top:818px;">−2</span>
<span class="t" style="font-size:14px;color:#000;transform:scaleX(1.0133);transform-origin:0 0;left:1365.56px;top:818px;">0</span>
<span class="t" style="font-size:14px;color:#000;transform:scaleX(1.0683);transform-origin:0 0;left:1419.31px;top:818px;">2</span>
<span class="t" style="font-size:14px;color:#000;transform:scaleX(0.9636);transform-origin:0 0;left:1474.79px;top:818px;">4</span>
<span class="t" style="font-size:14px;color:#000;transform:scaleX(1.0133);transform-origin:0 0;left:1013.72px;top:801px;">0</span>
<span class="t" style="font-size:14px;color:#000;transform:scaleX(1.0683);transform-origin:0 0;left:1013.47px;top:747px;">2</span>
<span class="t" style="font-size:14px;color:#000;transform:scaleX(0.9636);transform-origin:0 0;left:1013.95px;top:693px;">4</span>
<span class="t" style="font-size:14px;color:#000;transform:scaleX(1.0568);transform-origin:0 0;left:1013.48px;top:639px;">6</span>
<span class="t" style="font-size:14px;color:#000;transform:scaleX(1.0346);transform-origin:0 0;left:1013.64px;top:585px;">8</span>
<span class="t" style="font-size:14px;color:#000;transform:scaleX(1.0971);transform-origin:0 0;left:1004.59px;top:531px;">10</span>
<span class="t" style="font-size:14px;color:#000;transform:scaleX(1.1082);transform-origin:0 0;left:1004.58px;top:477px;">12</span>
<span class="t" style="font-size:14px;color:#000;transform:scaleX(1.0971);transform-origin:0 0;left:1556.85px;top:776px;">10</span>
<span class="t" style="font-size:14px;color:#000;transform:scaleX(1.0704);transform-origin:0 0;left:1557.25px;top:671px;">20</span>
<span class="t" style="font-size:14px;color:#000;transform:scaleX(1.0549);transform-origin:0 0;left:1557.48px;top:566px;">30</span>
<span class="t" style="font-size:14px;color:#000;transform:scaleX(1.0399);transform-origin:0 0;left:1557.71px;top:462px;">40</span>
<span class="t" style="font-size:17px;color:#000;transform:scaleX(1.1581);transform-origin:0 0;left:1170.92px;top:449px;">[0,0,L] = (-0.10,0.10)</span>
<span class="t" style="font-size:14px;color:#000;transform:scaleX(1.1778);transform-origin:0 0;left:1180.65px;top:837px;">[H,0,0] (in 0.664 A^-1)</span>
<span class="t" style="font-size:14px;color:#000;left:0;top:0;transform-origin:0 0;transform:translate(979.75px,721.20px) rotate(-90deg) scaleX(1.1654);">[0,K,0] (in 0.664 A^-1)</span>
</body></html>
